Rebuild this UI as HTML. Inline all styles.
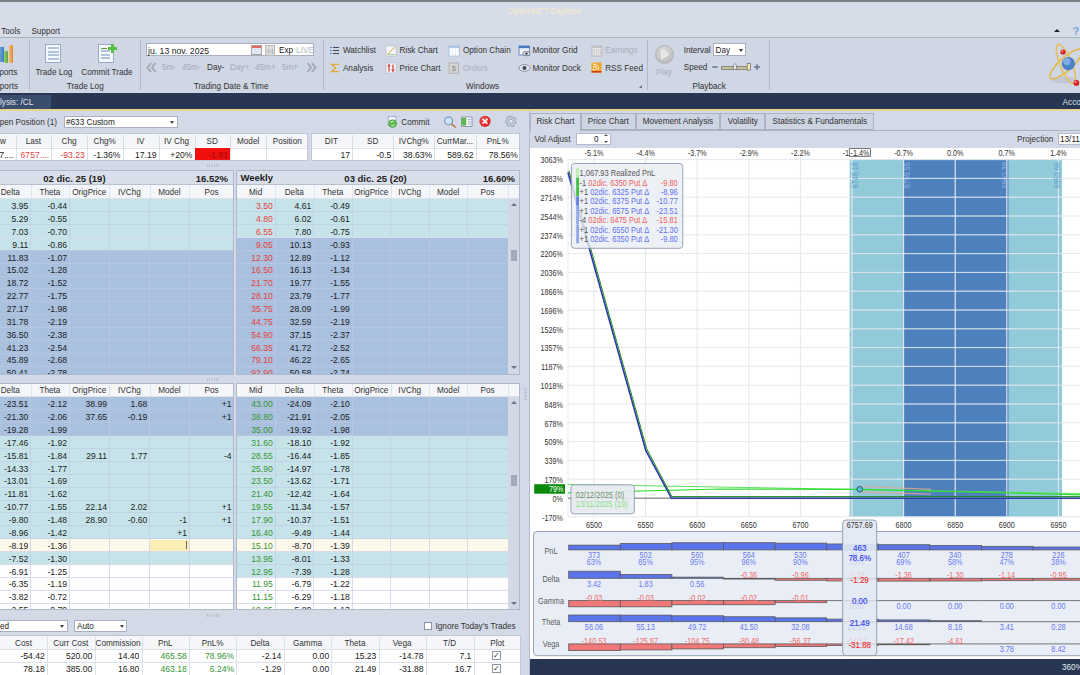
<!DOCTYPE html><html><head><meta charset="utf-8"><style>
html,body{margin:0;padding:0;width:1080px;height:675px;overflow:hidden;background:#d3d9e6;position:relative;font-family:"Liberation Sans",sans-serif;}
body div{position:absolute;}
.t{white-space:nowrap;}
</style></head><body><div style="left:0.00px;top:0.00px;width:1080.00px;height:2.00px;background:#7b7e83"></div>
<div style="left:0.00px;top:2.00px;width:1080.00px;height:35.00px;background:#d6dce8"></div>
<div class="t" style="left:508.00px;top:6.40px;height:12px;line-height:12px;font-size:8.2px;color:#f6eec8">OptionNET Explorer</div>
<div class="t" style="left:1.20px;top:25.50px;height:12px;line-height:12px;font-size:8.2px;color:#333">Tools</div>
<div class="t" style="left:31.40px;top:25.50px;height:12px;line-height:12px;font-size:8.2px;color:#333">Support</div>
<div style="left:1053.7px;top:28.8px;width:0;height:0;border-left:3.1px solid transparent;border-right:3.1px solid transparent;border-bottom:3px solid #222"></div>
<div class="t" style="left:1072.50px;top:24.70px;height:12px;line-height:12px;font-size:11px;color:#78a8e0;font-weight:bold">?</div>
<div style="left:0.00px;top:37.00px;width:1080.00px;height:1.00px;background:#a9b1bf"></div>
<div style="left:0.00px;top:38.00px;width:1080.00px;height:54.00px;background:#cfd6e4"></div>
<div style="left:28.50px;top:40.00px;width:1.00px;height:50.00px;background:#b3bbca"></div>
<div style="left:140.30px;top:40.00px;width:1.00px;height:50.00px;background:#b3bbca"></div>
<div style="left:323.00px;top:40.00px;width:1.00px;height:50.00px;background:#b3bbca"></div>
<div style="left:647.40px;top:40.00px;width:1.00px;height:50.00px;background:#b3bbca"></div>
<div style="left:769.40px;top:40.00px;width:1.00px;height:50.00px;background:#b3bbca"></div>
<div style="left:0px;top:47px;width:4px;height:15px;background:linear-gradient(90deg,#6aa0d8,#3f78c0)"></div>
<div style="left:4px;top:51px;width:4px;height:12px;background:linear-gradient(90deg,#9cd070,#58a040);border-radius:1px"></div>
<div style="left:8.5px;top:45px;width:4px;height:18px;background:linear-gradient(90deg,#f4c070,#e08a30);border-radius:1px"></div>
<div class="t" style="left:-182.60px;width:200.00px;text-align:right;top:66.90px;height:12px;line-height:12px;font-size:8.2px;color:#333">ports</div>
<div class="t" style="left:-182.00px;width:200.00px;text-align:right;top:81.10px;height:12px;line-height:12px;font-size:8.2px;color:#333">ports</div>
<div style="left:45px;top:44px;width:16px;height:19px;background:#f4f7fb;border:1px solid #9aaac0;box-sizing:border-box"></div>
<div style="left:47.50px;top:47.00px;width:11.00px;height:2.20px;background:#b0c2dc"></div>
<div style="left:47.50px;top:50.60px;width:11.00px;height:2.20px;background:#b0c2dc"></div>
<div style="left:47.50px;top:54.20px;width:11.00px;height:2.20px;background:#b0c2dc"></div>
<div style="left:47.50px;top:57.80px;width:11.00px;height:2.20px;background:#b0c2dc"></div>
<div class="t" style="left:35.40px;top:66.90px;height:12px;line-height:12px;font-size:8.2px;color:#333">Trade Log</div>
<div style="left:98px;top:44px;width:16px;height:19px;background:#f4f7fb;border:1px solid #9aaac0;box-sizing:border-box"></div>
<div style="left:100.50px;top:50.00px;width:9.00px;height:2.20px;background:#b0c2dc"></div>
<div style="left:100.50px;top:53.60px;width:9.00px;height:2.20px;background:#b0c2dc"></div>
<div style="left:100.50px;top:57.20px;width:9.00px;height:2.20px;background:#b0c2dc"></div>
<div style="left:101.00px;top:47.50px;width:6.00px;height:1.20px;background:#5aa040"></div>
<div style="left:108px;top:44px;width:9px;height:9px;background:#58c040;clip-path:polygon(33% 0,67% 0,67% 33%,100% 33%,100% 67%,67% 67%,67% 100%,33% 100%,33% 67%,0 67%,0 33%,33% 33%)"></div>
<div class="t" style="left:81.25px;top:66.90px;height:12px;line-height:12px;font-size:8.2px;color:#333">Commit Trade</div>
<div class="t" style="left:66.70px;top:81.10px;height:12px;line-height:12px;font-size:8.2px;color:#333">Trade Log</div>
<div style="left:146.2px;top:43.4px;width:168.3px;height:13.1px;background:#fff;border:1px solid #a6b0c0;box-sizing:border-box"></div>
<div class="t" style="left:148.00px;top:44.70px;height:12px;line-height:12px;font-size:8.2px;color:#222;font-size:8.7px">ju. 13 nov. 2025</div>
<div style="left:251.2px;top:45px;width:10.5px;height:10px;background:linear-gradient(#e86a5a 0,#e86a5a 30%,#dfe8f4 30%);border:1px solid #b0a0a0;box-sizing:border-box"></div>
<div style="left:265.3px;top:44.5px;width:10.2px;height:11px;background:#dcdcdc;border:1px solid #b8b8b8;box-sizing:border-box"></div>
<div class="t" style="left:265.40px;width:10.00px;text-align:center;top:44.70px;height:12px;line-height:12px;font-size:6px;color:#888">|-|</div>
<div class="t" style="left:279.00px;top:44.70px;height:12px;line-height:12px;font-size:8.2px;color:#222">Exp</div>
<div class="t" style="left:296.20px;top:44.70px;height:12px;line-height:12px;font-size:8.2px;color:#b4bac6">LIVE</div>
<svg style="position:absolute;left:146px;top:62px" width="11" height="11" viewBox="0 0 11 11"><path d="M5 1 L1.5 5.5 L5 10 M9.5 1 L6 5.5 L9.5 10" fill="none" stroke="#a4aab4" stroke-width="2"/></svg>
<div class="t" style="left:162.00px;top:61.90px;height:12px;line-height:12px;font-size:8.2px;color:#a4aab6">5m-</div>
<div class="t" style="left:182.00px;top:61.90px;height:12px;line-height:12px;font-size:8.2px;color:#a4aab6">45m-</div>
<div class="t" style="left:207.00px;top:61.90px;height:12px;line-height:12px;font-size:8.2px;color:#333">Day-</div>
<div class="t" style="left:230.00px;top:61.90px;height:12px;line-height:12px;font-size:8.2px;color:#a4aab6">Day+</div>
<div class="t" style="left:255.00px;top:61.90px;height:12px;line-height:12px;font-size:8.2px;color:#a4aab6">45m+</div>
<div class="t" style="left:282.00px;top:61.90px;height:12px;line-height:12px;font-size:8.2px;color:#a4aab6">5m+</div>
<svg style="position:absolute;left:305.5px;top:62px" width="11" height="11" viewBox="0 0 11 11"><path d="M1.5 1 L5 5.5 L1.5 10 M6 1 L9.5 5.5 L6 10" fill="none" stroke="#a4aab4" stroke-width="2"/></svg>
<div class="t" style="left:193.70px;top:80.90px;height:12px;line-height:12px;font-size:8.2px;color:#333">Trading Date &amp; Time</div>
<div style="left:330.00px;top:46.50px;width:1.60px;height:1.60px;background:#5a8ad0"></div>
<div style="left:332.50px;top:46.80px;width:6.50px;height:1.10px;background:#445"></div>
<div style="left:330.00px;top:49.50px;width:1.60px;height:1.60px;background:#5a8ad0"></div>
<div style="left:332.50px;top:49.80px;width:6.50px;height:1.10px;background:#445"></div>
<div style="left:330.00px;top:52.50px;width:1.60px;height:1.60px;background:#5a8ad0"></div>
<div style="left:332.50px;top:52.80px;width:6.50px;height:1.10px;background:#445"></div>
<div class="t" style="left:342.90px;top:45.20px;height:12px;line-height:12px;font-size:8.2px;color:#333">Watchlist</div>
<svg style="position:absolute;left:329.5px;top:62.5px" width="10" height="10" viewBox="0 0 10 10"><path d="M9 1.4 L1.8 1.4 L5.6 5 L1.8 8.6 L9 8.6" fill="none" stroke="#e8a838" stroke-width="1.4" stroke-linejoin="miter"/></svg>
<div class="t" style="left:342.90px;top:62.60px;height:12px;line-height:12px;font-size:8.2px;color:#333">Analysis</div>
<svg style="position:absolute;left:385px;top:44.5px" width="12" height="12" viewBox="385 44.5 12 12"><rect x="386" y="45.5" width="10" height="10" fill="#f6f8fa" stroke="#b8c2d0" stroke-width="0.8"/><path d="M387.5 53.5 C389.5 53.5 390 50.5 391.2 49.8 C392.4 49 393 48 394.8 47" fill="none" stroke="#d0a020" stroke-width="1"/><path d="M387.5 54 L394.8 54" stroke="#70b050" stroke-width="0.6"/></svg>
<div class="t" style="left:399.50px;top:45.20px;height:12px;line-height:12px;font-size:8.2px;color:#333">Risk Chart</div>
<svg style="position:absolute;left:385px;top:62px" width="12" height="12" viewBox="385 62 12 12"><rect x="386" y="63" width="10" height="10" fill="#f8f8fa" stroke="#b8c2d0" stroke-width="0.8"/><path d="M389 64.5 L389 71.5 M393 64.5 L393 71.5" stroke="#d02020" stroke-width="1.1"/><path d="M387.6 66.4 L389 64.6 L390.4 66.4 M391.6 69.6 L393 71.4 L394.4 69.6" fill="none" stroke="#d02020" stroke-width="0.9"/></svg>
<div class="t" style="left:399.50px;top:62.60px;height:12px;line-height:12px;font-size:8.2px;color:#333">Price Chart</div>
<svg style="position:absolute;left:447.5px;top:45px" width="12" height="12" viewBox="447.5 45 12 12"><rect x="448.4" y="46" width="10.5" height="10" fill="#dfe9f6" stroke="#b0c4de" stroke-width="0.8"/><rect x="448.4" y="46" width="10.5" height="1.8" fill="#a8c0e0"/><rect x="449.8" y="48.2" width="2" height="7.2" fill="#fff"/><rect x="452.7" y="48.2" width="2" height="7.2" fill="#fff"/><rect x="455.6" y="48.2" width="2" height="7.2" fill="#fff"/></svg>
<div class="t" style="left:462.90px;top:45.20px;height:12px;line-height:12px;font-size:8.2px;color:#333">Option Chain</div>
<svg style="position:absolute;left:447.5px;top:62px" width="12" height="12" viewBox="447.5 62 12 12"><rect x="448.6" y="63" width="9.5" height="10.2" fill="#d4d4d4" stroke="#a8a8a8" stroke-width="0.8"/><text x="453.3" y="71.3" font-size="7.5" text-anchor="middle" fill="#8a8a8a" font-family="Liberation Sans">$</text></svg>
<div class="t" style="left:462.90px;top:62.60px;height:12px;line-height:12px;font-size:8.2px;color:#a8aebb">Orders</div>
<svg style="position:absolute;left:518px;top:45px" width="13" height="12" viewBox="518 45 13 12"><rect x="519" y="46" width="10.5" height="9" fill="#eef3fa" stroke="#5a80c0" stroke-width="0.9"/><rect x="519" y="46" width="10.5" height="2.2" fill="#4a78c0"/><ellipse cx="526.5" cy="53.6" rx="3.6" ry="2.2" fill="#dfe4ea" stroke="#5a6070" stroke-width="0.7"/><circle cx="526.5" cy="53.6" r="1.2" fill="#303848"/></svg>
<div class="t" style="left:532.50px;top:45.20px;height:12px;line-height:12px;font-size:8.2px;color:#333">Monitor Grid</div>
<svg style="position:absolute;left:518px;top:63px" width="13" height="10" viewBox="518 63 13 10"><ellipse cx="524.5" cy="67.9" rx="5.6" ry="3.4" fill="#dfe4ea" stroke="#7a8090" stroke-width="0.8"/><circle cx="524.5" cy="67.9" r="2" fill="#404858"/></svg>
<div class="t" style="left:532.50px;top:62.60px;height:12px;line-height:12px;font-size:8.2px;color:#333">Monitor Dock</div>
<svg style="position:absolute;left:590.5px;top:44.5px" width="12" height="12" viewBox="590.5 44.5 12 12"><rect x="591.5" y="45.5" width="10" height="10" fill="#e4e4e4" stroke="#b4b4b4" stroke-width="0.8"/><rect x="591.5" y="45.5" width="10" height="2" fill="#c4c4c4"/><path d="M593.5 49 L593.5 54 M595.8 49 L595.8 54 M598.1 49 L598.1 54 M600 49 L600 54" stroke="#c0c0c0" stroke-width="0.7"/></svg>
<div class="t" style="left:605.20px;top:45.20px;height:12px;line-height:12px;font-size:8.2px;color:#a8aebb">Earnings</div>
<svg style="position:absolute;left:591px;top:62px" width="11" height="11" viewBox="591 62 11 11"><rect x="591.5" y="62.5" width="10" height="10" fill="#f0a428"/><rect x="591.5" y="71" width="10" height="1.6" fill="#d83a18"/><circle cx="593.6" cy="69.4" r="1" fill="#fff"/><path d="M593 66.2 a3.4 3.4 0 0 1 3.6 3.4 M593 64 a5.6 5.6 0 0 1 5.8 5.6" fill="none" stroke="#fff" stroke-width="1"/></svg>
<div class="t" style="left:605.20px;top:62.60px;height:12px;line-height:12px;font-size:8.2px;color:#333">RSS Feed</div>
<div class="t" style="left:466.00px;top:80.90px;height:12px;line-height:12px;font-size:8.2px;color:#333">Windows</div>
<div style="left:639px;top:85px;width:0;height:0;border-left:3px solid transparent;border-bottom:3px solid #6a7080"></div>
<div style="left:654.9px;top:44.9px;width:18.8px;height:18.8px;border-radius:50%;background:radial-gradient(circle at 45% 30%,#dcdcdc,#c4c4c4 60%,#b4b4b4);border:0.8px solid #b0b2b8;box-sizing:border-box"></div>
<svg style="position:absolute;left:654px;top:44px" width="20" height="20" viewBox="654 44 20 20"><path d="M661.6 49.8 L668.8 54.3 L661.6 58.8 Z" fill="#e4e4e4" stroke="#f4f4f4" stroke-width="0.8"/></svg>
<div class="t" style="left:649.00px;width:30.00px;text-align:center;top:66.90px;height:12px;line-height:12px;font-size:8.2px;color:#a8aebb">Play</div>
<div class="t" style="left:683.70px;top:44.70px;height:12px;line-height:12px;font-size:8.2px;color:#333">Interval</div>
<div style="left:713.1px;top:43.4px;width:33.4px;height:13.1px;background:#fff;border:1px solid #a6b0c0;box-sizing:border-box"></div>
<div class="t" style="left:715.50px;top:44.70px;height:12px;line-height:12px;font-size:8.2px;color:#222">Day</div>
<div style="left:738.5px;top:48.5px;width:0;height:0;border-left:2.5px solid transparent;border-right:2.5px solid transparent;border-top:3px solid #333"></div>
<div class="t" style="left:683.70px;top:61.90px;height:12px;line-height:12px;font-size:8.2px;color:#333">Speed</div>
<div style="left:711.50px;top:66.20px;width:6.50px;height:1.80px;background:#8090a8;border-radius:1px"></div>
<div style="left:721.00px;top:66.30px;width:27.00px;height:1.80px;background:#c8c098;border:0.5px solid #8a8a80"></div>
<svg style="position:absolute;left:730px;top:62px" width="30" height="10" viewBox="730 62 30 10"><path d="M734.9 63.6 L736.4 65 L736.4 68.6 L734.9 70 L733.4 68.6 L733.4 65 Z" fill="#e8e8e8" stroke="#6a7080" stroke-width="0.7"/><rect x="747.2" y="63.4" width="3.3" height="6.8" fill="#f8e8a8" stroke="#6a6a70" stroke-width="0.7"/><path d="M754 67.1 L760 67.1 M757 64.2 L757 70" stroke="#6a7890" stroke-width="1.5"/></svg>
<div class="t" style="left:692.50px;top:80.90px;height:12px;line-height:12px;font-size:8.2px;color:#333">Playback</div>
<svg style="position:absolute;left:1040px;top:38px" width="40" height="54" viewBox="1040 38 40 54">
<ellipse cx="1063" cy="80" rx="13" ry="3.5" fill="#b8bcc8" opacity="0.55"/>
<ellipse cx="1066" cy="64" rx="21" ry="6.5" transform="rotate(-42 1066 64)" fill="none" stroke="#e4b840" stroke-width="1.5"/>
<ellipse cx="1066" cy="64" rx="21" ry="6" transform="rotate(68 1066 64)" fill="none" stroke="#e8c050" stroke-width="1.5"/>
<circle cx="1068.4" cy="63.7" r="6.6" fill="#4a80c8"/>
<circle cx="1066.8" cy="61.6" r="3.6" fill="#8cb8e8" opacity="0.8"/>
<circle cx="1063" cy="52" r="2.6" fill="#d82020"/><circle cx="1062.4" cy="51.3" r="1" fill="#ff9090"/>
<circle cx="1076.4" cy="82.9" r="2.9" fill="#d82020"/><circle cx="1075.6" cy="82" r="1.1" fill="#ff9090"/>
</svg>
<div style="left:0.00px;top:93.00px;width:1080.00px;height:16.00px;background:#283652"></div>
<div style="left:0.00px;top:95.00px;width:51.00px;height:14.00px;background:#3a4d6c"></div>
<div class="t" style="left:0.00px;top:96.70px;height:12px;line-height:12px;font-size:8.2px;color:#e2e8f2">lysis: /CL</div>
<div class="t" style="left:1062.60px;top:97.20px;height:12px;line-height:12px;font-size:8.2px;color:#dce2ec">Acco</div>
<div style="left:0.00px;top:109.00px;width:1080.00px;height:2.00px;background:#e4d68e"></div>
<div style="left:0.00px;top:111.00px;width:529.00px;height:564.00px;background:#d3d9e6"></div>
<div class="t" style="left:-143.00px;width:200.00px;text-align:right;top:116.70px;height:12px;line-height:12px;font-size:8.2px;color:#333">pen Position (1)</div>
<div style="left:63.5px;top:115.75px;width:114px;height:11.75px;background:#fff;border:1px solid #a6b0c0;box-sizing:border-box"></div>
<div class="t" style="left:66.00px;top:116.70px;height:12px;line-height:12px;font-size:8.2px;color:#222">#633 Custom</div>
<div style="left:170px;top:120.5px;width:0;height:0;border-left:2.5px solid transparent;border-right:2.5px solid transparent;border-top:3px solid #444"></div>
<svg style="position:absolute;left:380px;top:112px" width="140" height="20" viewBox="380 112 140 20">
<rect x="388.3" y="116.6" width="7.6" height="9" fill="#f6f8fb" stroke="#8fa0c0" stroke-width="0.8"/>
<circle cx="392.6" cy="123.6" r="3.9" fill="#58b848" stroke="#3a8a38" stroke-width="0.5"/>
<path d="M390.6 123 a2 2 0 0 1 3.6 -0.8 M394.6 124.2 a2 2 0 0 1 -3.6 0.8" fill="none" stroke="#e8f8e0" stroke-width="0.9"/>
<line x1="451.5" y1="123.8" x2="455.2" y2="127" stroke="#b87830" stroke-width="1.6" stroke-linecap="round"/>
<circle cx="448.6" cy="120.9" r="3.9" fill="#cfe2f6" stroke="#6a8ec0" stroke-width="1.1"/>
<rect x="461.6" y="117" width="10.4" height="9.4" fill="#fafbfd" stroke="#7c8aa4" stroke-width="0.8"/>
<rect x="461.6" y="117.8" width="4.6" height="7.8" fill="#5cb848"/>
<line x1="467.6" y1="119.6" x2="471.2" y2="119.6" stroke="#8090a8" stroke-width="0.7"/>
<line x1="467.6" y1="121.8" x2="471.2" y2="121.8" stroke="#8090a8" stroke-width="0.7"/>
<line x1="467.6" y1="124" x2="471.2" y2="124" stroke="#8090a8" stroke-width="0.7"/>
<circle cx="485" cy="121.3" r="5.6" fill="#e02828"/>
<circle cx="484.2" cy="120.2" r="3.8" fill="#f06060" opacity="0.6"/>
<path d="M482.6 118.9 L487.4 123.7 M487.4 118.9 L482.6 123.7" stroke="#fff" stroke-width="1.5"/>
<g transform="translate(511 121.3)"><path d="M-1.1 -5 L1.1 -5 L1.4 -3.6 L2.7 -3 L3.9 -3.9 L5 -2.4 L3.9 -1.3 L4.2 0 L5.2 0.6 L4.7 2.6 L3.4 2.6 L2.6 3.6 L2.9 4.9 L1 5.3 L0.2 4.2 L-1.2 4.2 L-2 5.2 L-3.8 4.2 L-3.4 2.9 L-4.2 1.8 L-5.4 1.4 L-5.2 -0.6 L-4 -1.1 L-3.6 -2.4 L-4.2 -3.6 L-2.6 -4.8 L-1.6 -3.9 Z" fill="#c4cedf" stroke="#8290a8" stroke-width="0.7"/><circle r="2" fill="#e4e9f2" stroke="#8290a8" stroke-width="0.6"/></g>
</svg>
<div class="t" style="left:401.25px;top:116.70px;height:12px;line-height:12px;font-size:8.2px;color:#333">Commit</div>
<div style="left:-20.00px;top:133.10px;width:328.25px;height:27.60px;background:#fff;border:1px solid #bfc7d4;box-sizing:border-box"></div>
<div style="left:-19.00px;top:134.10px;width:326.25px;height:13.40px;background:#f4f6fa"></div>
<div style="left:-19.00px;top:147.50px;width:326.25px;height:0.80px;background:#dfe4ec"></div>
<div style="left:15.50px;top:134.75px;width:0.90px;height:25.00px;background:#d8dee8"></div>
<div style="left:51.25px;top:134.75px;width:0.90px;height:25.00px;background:#d8dee8"></div>
<div style="left:86.75px;top:134.75px;width:0.90px;height:25.00px;background:#d8dee8"></div>
<div style="left:122.50px;top:134.75px;width:0.90px;height:25.00px;background:#d8dee8"></div>
<div style="left:158.50px;top:134.75px;width:0.90px;height:25.00px;background:#d8dee8"></div>
<div style="left:194.50px;top:134.75px;width:0.90px;height:25.00px;background:#d8dee8"></div>
<div style="left:230.00px;top:134.75px;width:0.90px;height:25.00px;background:#d8dee8"></div>
<div style="left:266.25px;top:134.75px;width:0.90px;height:25.00px;background:#d8dee8"></div>
<div class="t" style="left:-20.00px;width:35.50px;text-align:center;top:135.70px;height:12px;line-height:12px;font-size:8.2px;color:#333">Now</div>
<div class="t" style="left:15.50px;width:35.75px;text-align:center;top:135.70px;height:12px;line-height:12px;font-size:8.2px;color:#333">Last</div>
<div class="t" style="left:51.25px;width:35.50px;text-align:center;top:135.70px;height:12px;line-height:12px;font-size:8.2px;color:#333">Chg</div>
<div class="t" style="left:86.75px;width:35.75px;text-align:center;top:135.70px;height:12px;line-height:12px;font-size:8.2px;color:#333">Chg%</div>
<div class="t" style="left:122.50px;width:36.00px;text-align:center;top:135.70px;height:12px;line-height:12px;font-size:8.2px;color:#333">IV</div>
<div class="t" style="left:158.50px;width:36.00px;text-align:center;top:135.70px;height:12px;line-height:12px;font-size:8.2px;color:#333">IV Chg</div>
<div class="t" style="left:194.50px;width:35.50px;text-align:center;top:135.70px;height:12px;line-height:12px;font-size:8.2px;color:#333">SD</div>
<div class="t" style="left:230.00px;width:36.25px;text-align:center;top:135.70px;height:12px;line-height:12px;font-size:8.2px;color:#333">Model</div>
<div class="t" style="left:266.25px;width:42.00px;text-align:center;top:135.70px;height:12px;line-height:12px;font-size:8.2px;color:#333">Position</div>
<div class="t" style="left:-19.00px;width:32.50px;text-align:right;top:149.20px;height:12px;line-height:12px;font-size:8.2px;color:#222;font-size:8.6px">7....</div>
<div class="t" style="left:16.50px;width:32.75px;text-align:right;top:149.20px;height:12px;line-height:12px;font-size:8.2px;color:#e8403c;font-size:8.6px">6757....</div>
<div class="t" style="left:52.25px;width:32.50px;text-align:right;top:149.20px;height:12px;line-height:12px;font-size:8.2px;color:#e8403c;font-size:8.6px">-93.23</div>
<div class="t" style="left:87.75px;width:32.75px;text-align:right;top:149.20px;height:12px;line-height:12px;font-size:8.2px;color:#222;font-size:8.6px">-1.36%</div>
<div class="t" style="left:123.50px;width:33.00px;text-align:right;top:149.20px;height:12px;line-height:12px;font-size:8.2px;color:#222;font-size:8.6px">17.19</div>
<div class="t" style="left:159.50px;width:33.00px;text-align:right;top:149.20px;height:12px;line-height:12px;font-size:8.2px;color:#222;font-size:8.6px">+20%</div>
<div class="t" style="left:195.50px;width:32.50px;text-align:right;top:149.20px;height:12px;line-height:12px;font-size:8.2px;color:#8a0000;font-size:8.6px">-1.81</div>
<div class="t" style="left:231.00px;width:33.25px;text-align:right;top:149.20px;height:12px;line-height:12px;font-size:8.2px;color:#222;font-size:8.6px"></div>
<div class="t" style="left:267.25px;width:39.00px;text-align:right;top:149.20px;height:12px;line-height:12px;font-size:8.2px;color:#222;font-size:8.6px"></div>
<div style="left:195.40px;top:148.30px;width:34.60px;height:12.20px;background:#f01010"></div>
<div class="t" style="left:198.00px;width:30.00px;text-align:right;top:149.20px;height:12px;line-height:12px;font-size:8.2px;color:#a00000;font-size:8.6px">-1.81</div>
<div style="left:310.75px;top:133.10px;width:209.25px;height:27.60px;background:#fff;border:1px solid #bfc7d4;box-sizing:border-box"></div>
<div style="left:311.75px;top:134.10px;width:207.25px;height:13.40px;background:#f4f6fa"></div>
<div style="left:311.75px;top:147.50px;width:207.25px;height:0.80px;background:#dfe4ec"></div>
<div style="left:352.00px;top:134.75px;width:0.90px;height:25.00px;background:#d8dee8"></div>
<div style="left:393.25px;top:134.75px;width:0.90px;height:25.00px;background:#d8dee8"></div>
<div style="left:434.25px;top:134.75px;width:0.90px;height:25.00px;background:#d8dee8"></div>
<div style="left:475.50px;top:134.75px;width:0.90px;height:25.00px;background:#d8dee8"></div>
<div class="t" style="left:310.75px;width:41.25px;text-align:center;top:135.70px;height:12px;line-height:12px;font-size:8.2px;color:#333">DIT</div>
<div class="t" style="left:352.00px;width:41.25px;text-align:center;top:135.70px;height:12px;line-height:12px;font-size:8.2px;color:#333">SD</div>
<div class="t" style="left:393.25px;width:41.00px;text-align:center;top:135.70px;height:12px;line-height:12px;font-size:8.2px;color:#333">IVChg%</div>
<div class="t" style="left:434.25px;width:41.25px;text-align:center;top:135.70px;height:12px;line-height:12px;font-size:8.2px;color:#333">CurrMar...</div>
<div class="t" style="left:475.50px;width:44.50px;text-align:center;top:135.70px;height:12px;line-height:12px;font-size:8.2px;color:#333">PnL%</div>
<div class="t" style="left:311.75px;width:38.25px;text-align:right;top:149.20px;height:12px;line-height:12px;font-size:8.2px;color:#222;font-size:8.6px">17</div>
<div class="t" style="left:353.00px;width:38.25px;text-align:right;top:149.20px;height:12px;line-height:12px;font-size:8.2px;color:#222;font-size:8.6px">-0.5</div>
<div class="t" style="left:394.25px;width:38.00px;text-align:right;top:149.20px;height:12px;line-height:12px;font-size:8.2px;color:#222;font-size:8.6px">38.63%</div>
<div class="t" style="left:435.25px;width:38.25px;text-align:right;top:149.20px;height:12px;line-height:12px;font-size:8.2px;color:#222;font-size:8.6px">589.62</div>
<div class="t" style="left:476.50px;width:41.50px;text-align:right;top:149.20px;height:12px;line-height:12px;font-size:8.2px;color:#222;font-size:8.6px">78.56%</div>
<div style="left:207px;top:164px;width:12px;height:3px;background:repeating-linear-gradient(90deg,#aeb6c4 0 1px,transparent 1px 2.2px);opacity:0.75"></div>
<div style="left:0px;top:169.8px;width:233.75px;height:205.3px;overflow:hidden;background:#fff;border:1px solid #b0b9ca;border-left:none;box-sizing:border-box">
<div style="left:0.00px;top:-1.00px;width:233.75px;height:15.20px;background:#d9dfea"></div>
<div style="left:0.00px;top:13.40px;width:233.75px;height:0.80px;background:#b8c1cf"></div>
<div class="t" style="left:14.40px;width:120.00px;text-align:center;top:1.80px;height:12px;line-height:12px;font-size:8.2px;color:#222;font-weight:bold;font-size:9.5px">02 dic. 25 (19)</div>
<div class="t" style="left:148.00px;width:80.00px;text-align:right;top:1.80px;height:12px;line-height:12px;font-size:8.2px;color:#222;font-weight:bold;font-size:9.5px">16.52%</div>
<div style="left:0.00px;top:14.20px;width:233.75px;height:13.90px;background:#f4f6fa"></div>
<div style="left:0.00px;top:27.30px;width:233.75px;height:0.80px;background:#dde3eb"></div>
<div class="t" style="left:-12.00px;width:44.50px;text-align:center;top:15.85px;height:12px;line-height:12px;font-size:8.2px;color:#333">Delta</div>
<div class="t" style="left:28.50px;width:42.75px;text-align:center;top:15.85px;height:12px;line-height:12px;font-size:8.2px;color:#333">Theta</div>
<div class="t" style="left:67.25px;width:44.00px;text-align:center;top:15.85px;height:12px;line-height:12px;font-size:8.2px;color:#333">OrigPrice</div>
<div class="t" style="left:107.25px;width:44.25px;text-align:center;top:15.85px;height:12px;line-height:12px;font-size:8.2px;color:#333">IVChg</div>
<div class="t" style="left:147.50px;width:43.75px;text-align:center;top:15.85px;height:12px;line-height:12px;font-size:8.2px;color:#333">Model</div>
<div class="t" style="left:187.25px;width:48.50px;text-align:center;top:15.85px;height:12px;line-height:12px;font-size:8.2px;color:#333">Pos</div>
<div style="left:30.50px;top:14.20px;width:0.90px;height:13.90px;background:#dfe4ec"></div>
<div style="left:69.25px;top:14.20px;width:0.90px;height:13.90px;background:#dfe4ec"></div>
<div style="left:109.25px;top:14.20px;width:0.90px;height:13.90px;background:#dfe4ec"></div>
<div style="left:149.50px;top:14.20px;width:0.90px;height:13.90px;background:#dfe4ec"></div>
<div style="left:189.25px;top:14.20px;width:0.90px;height:13.90px;background:#dfe4ec"></div>
<div style="left:233.75px;top:14.20px;width:0.90px;height:13.90px;background:#dfe4ec"></div>
<div style="left:0.00px;top:28.10px;width:233.75px;height:12.87px;background:#c6e3e9"></div>
<div style="left:0.00px;top:40.97px;width:233.75px;height:12.87px;background:#c6e3e9"></div>
<div style="left:0.00px;top:53.84px;width:233.75px;height:12.87px;background:#c6e3e9"></div>
<div style="left:0.00px;top:66.71px;width:233.75px;height:12.87px;background:#c6e3e9"></div>
<div style="left:0.00px;top:79.58px;width:233.75px;height:12.87px;background:#a9c0de"></div>
<div style="left:0.00px;top:92.45px;width:233.75px;height:12.87px;background:#a9c0de"></div>
<div style="left:0.00px;top:105.32px;width:233.75px;height:12.87px;background:#a9c0de"></div>
<div style="left:0.00px;top:118.19px;width:233.75px;height:12.87px;background:#a9c0de"></div>
<div style="left:0.00px;top:131.06px;width:233.75px;height:12.87px;background:#a9c0de"></div>
<div style="left:0.00px;top:143.93px;width:233.75px;height:12.87px;background:#a9c0de"></div>
<div style="left:0.00px;top:156.80px;width:233.75px;height:12.87px;background:#a9c0de"></div>
<div style="left:0.00px;top:169.67px;width:233.75px;height:12.87px;background:#a9c0de"></div>
<div style="left:0.00px;top:182.54px;width:233.75px;height:12.87px;background:#a9c0de"></div>
<div style="left:0.00px;top:195.41px;width:233.75px;height:12.87px;background:#a9c0de"></div>
<div style="left:0.00px;top:208.28px;width:233.75px;height:12.87px;background:#a9c0de"></div>
<div style="left:0.00px;top:40.47px;width:233.75px;height:1.00px;background:rgba(196,200,226,0.62)"></div>
<div style="left:0.00px;top:53.34px;width:233.75px;height:1.00px;background:rgba(196,200,226,0.62)"></div>
<div style="left:0.00px;top:66.21px;width:233.75px;height:1.00px;background:rgba(196,200,226,0.62)"></div>
<div style="left:0.00px;top:79.08px;width:233.75px;height:1.00px;background:rgba(196,200,226,0.62)"></div>
<div style="left:0.00px;top:91.95px;width:233.75px;height:1.00px;background:rgba(196,200,226,0.62)"></div>
<div style="left:0.00px;top:104.82px;width:233.75px;height:1.00px;background:rgba(196,200,226,0.62)"></div>
<div style="left:0.00px;top:117.69px;width:233.75px;height:1.00px;background:rgba(196,200,226,0.62)"></div>
<div style="left:0.00px;top:130.56px;width:233.75px;height:1.00px;background:rgba(196,200,226,0.62)"></div>
<div style="left:0.00px;top:143.43px;width:233.75px;height:1.00px;background:rgba(196,200,226,0.62)"></div>
<div style="left:0.00px;top:156.30px;width:233.75px;height:1.00px;background:rgba(196,200,226,0.62)"></div>
<div style="left:0.00px;top:169.17px;width:233.75px;height:1.00px;background:rgba(196,200,226,0.62)"></div>
<div style="left:0.00px;top:182.04px;width:233.75px;height:1.00px;background:rgba(196,200,226,0.62)"></div>
<div style="left:0.00px;top:194.91px;width:233.75px;height:1.00px;background:rgba(196,200,226,0.62)"></div>
<div style="left:0.00px;top:207.78px;width:233.75px;height:1.00px;background:rgba(196,200,226,0.62)"></div>
<div style="left:0.00px;top:220.65px;width:233.75px;height:1.00px;background:rgba(196,200,226,0.62)"></div>
<div style="left:30.00px;top:28.10px;width:1.00px;height:176.20px;background:rgba(196,200,226,0.62)"></div>
<div style="left:68.75px;top:28.10px;width:1.00px;height:176.20px;background:rgba(196,200,226,0.62)"></div>
<div style="left:108.75px;top:28.10px;width:1.00px;height:176.20px;background:rgba(196,200,226,0.62)"></div>
<div style="left:149.00px;top:28.10px;width:1.00px;height:176.20px;background:rgba(196,200,226,0.62)"></div>
<div style="left:188.75px;top:28.10px;width:1.00px;height:176.20px;background:rgba(196,200,226,0.62)"></div>
<div style="left:233.25px;top:28.10px;width:1.00px;height:176.20px;background:rgba(196,200,226,0.62)"></div>
<div class="t" style="left:-12.20px;width:40.50px;text-align:right;top:29.23px;height:12px;line-height:12px;font-size:8.2px;color:#222;font-size:8.6px">3.95</div>
<div class="t" style="left:28.30px;width:38.75px;text-align:right;top:29.23px;height:12px;line-height:12px;font-size:8.2px;color:#222;font-size:8.6px">-0.44</div>
<div class="t" style="left:-12.20px;width:40.50px;text-align:right;top:42.11px;height:12px;line-height:12px;font-size:8.2px;color:#222;font-size:8.6px">5.29</div>
<div class="t" style="left:28.30px;width:38.75px;text-align:right;top:42.11px;height:12px;line-height:12px;font-size:8.2px;color:#222;font-size:8.6px">-0.55</div>
<div class="t" style="left:-12.20px;width:40.50px;text-align:right;top:54.98px;height:12px;line-height:12px;font-size:8.2px;color:#222;font-size:8.6px">7.03</div>
<div class="t" style="left:28.30px;width:38.75px;text-align:right;top:54.98px;height:12px;line-height:12px;font-size:8.2px;color:#222;font-size:8.6px">-0.70</div>
<div class="t" style="left:-12.20px;width:40.50px;text-align:right;top:67.84px;height:12px;line-height:12px;font-size:8.2px;color:#222;font-size:8.6px">9.11</div>
<div class="t" style="left:28.30px;width:38.75px;text-align:right;top:67.84px;height:12px;line-height:12px;font-size:8.2px;color:#222;font-size:8.6px">-0.86</div>
<div class="t" style="left:-12.20px;width:40.50px;text-align:right;top:80.71px;height:12px;line-height:12px;font-size:8.2px;color:#222;font-size:8.6px">11.83</div>
<div class="t" style="left:28.30px;width:38.75px;text-align:right;top:80.71px;height:12px;line-height:12px;font-size:8.2px;color:#222;font-size:8.6px">-1.07</div>
<div class="t" style="left:-12.20px;width:40.50px;text-align:right;top:93.58px;height:12px;line-height:12px;font-size:8.2px;color:#222;font-size:8.6px">15.02</div>
<div class="t" style="left:28.30px;width:38.75px;text-align:right;top:93.58px;height:12px;line-height:12px;font-size:8.2px;color:#222;font-size:8.6px">-1.28</div>
<div class="t" style="left:-12.20px;width:40.50px;text-align:right;top:106.45px;height:12px;line-height:12px;font-size:8.2px;color:#222;font-size:8.6px">18.72</div>
<div class="t" style="left:28.30px;width:38.75px;text-align:right;top:106.45px;height:12px;line-height:12px;font-size:8.2px;color:#222;font-size:8.6px">-1.52</div>
<div class="t" style="left:-12.20px;width:40.50px;text-align:right;top:119.33px;height:12px;line-height:12px;font-size:8.2px;color:#222;font-size:8.6px">22.77</div>
<div class="t" style="left:28.30px;width:38.75px;text-align:right;top:119.33px;height:12px;line-height:12px;font-size:8.2px;color:#222;font-size:8.6px">-1.75</div>
<div class="t" style="left:-12.20px;width:40.50px;text-align:right;top:132.19px;height:12px;line-height:12px;font-size:8.2px;color:#222;font-size:8.6px">27.17</div>
<div class="t" style="left:28.30px;width:38.75px;text-align:right;top:132.19px;height:12px;line-height:12px;font-size:8.2px;color:#222;font-size:8.6px">-1.98</div>
<div class="t" style="left:-12.20px;width:40.50px;text-align:right;top:145.06px;height:12px;line-height:12px;font-size:8.2px;color:#222;font-size:8.6px">31.78</div>
<div class="t" style="left:28.30px;width:38.75px;text-align:right;top:145.06px;height:12px;line-height:12px;font-size:8.2px;color:#222;font-size:8.6px">-2.19</div>
<div class="t" style="left:-12.20px;width:40.50px;text-align:right;top:157.94px;height:12px;line-height:12px;font-size:8.2px;color:#222;font-size:8.6px">36.50</div>
<div class="t" style="left:28.30px;width:38.75px;text-align:right;top:157.94px;height:12px;line-height:12px;font-size:8.2px;color:#222;font-size:8.6px">-2.38</div>
<div class="t" style="left:-12.20px;width:40.50px;text-align:right;top:170.81px;height:12px;line-height:12px;font-size:8.2px;color:#222;font-size:8.6px">41.23</div>
<div class="t" style="left:28.30px;width:38.75px;text-align:right;top:170.81px;height:12px;line-height:12px;font-size:8.2px;color:#222;font-size:8.6px">-2.54</div>
<div class="t" style="left:-12.20px;width:40.50px;text-align:right;top:183.68px;height:12px;line-height:12px;font-size:8.2px;color:#222;font-size:8.6px">45.89</div>
<div class="t" style="left:28.30px;width:38.75px;text-align:right;top:183.68px;height:12px;line-height:12px;font-size:8.2px;color:#222;font-size:8.6px">-2.68</div>
<div class="t" style="left:-12.20px;width:40.50px;text-align:right;top:196.55px;height:12px;line-height:12px;font-size:8.2px;color:#222;font-size:8.6px">50.41</div>
<div class="t" style="left:28.30px;width:38.75px;text-align:right;top:196.55px;height:12px;line-height:12px;font-size:8.2px;color:#222;font-size:8.6px">-2.78</div>
<div class="t" style="left:-12.20px;width:40.50px;text-align:right;top:209.41px;height:12px;line-height:12px;font-size:8.2px;color:#222;font-size:8.6px">54.80</div>
<div class="t" style="left:28.30px;width:38.75px;text-align:right;top:209.41px;height:12px;line-height:12px;font-size:8.2px;color:#222;font-size:8.6px">-2.85</div>
</div>
<div style="left:236.25px;top:169.8px;width:283.75px;height:205.3px;overflow:hidden;background:#fff;border:1px solid #b0b9ca;box-sizing:border-box">
<div style="left:-1.00px;top:-1.00px;width:283.75px;height:15.20px;background:#d9dfea"></div>
<div style="left:-1.00px;top:13.40px;width:283.75px;height:0.80px;background:#b8c1cf"></div>
<div class="t" style="left:3.15px;top:1.10px;height:12px;line-height:12px;color:#222;font-weight:bold;font-size:9.5px">Weekly</div>
<div class="t" style="left:78.25px;width:120.00px;text-align:center;top:1.80px;height:12px;line-height:12px;font-size:8.2px;color:#222;font-weight:bold;font-size:9.5px">03 dic. 25 (20)</div>
<div class="t" style="left:197.75px;width:80.00px;text-align:right;top:1.80px;height:12px;line-height:12px;font-size:8.2px;color:#222;font-weight:bold;font-size:9.5px">16.60%</div>
<div style="left:-1.00px;top:14.20px;width:283.75px;height:13.90px;background:#f4f6fa"></div>
<div style="left:-1.00px;top:27.30px;width:283.75px;height:0.80px;background:#dde3eb"></div>
<div class="t" style="left:-3.00px;width:42.75px;text-align:center;top:15.85px;height:12px;line-height:12px;font-size:8.2px;color:#333">Mid</div>
<div class="t" style="left:35.75px;width:42.50px;text-align:center;top:15.85px;height:12px;line-height:12px;font-size:8.2px;color:#333">Delta</div>
<div class="t" style="left:74.25px;width:42.50px;text-align:center;top:15.85px;height:12px;line-height:12px;font-size:8.2px;color:#333">Theta</div>
<div class="t" style="left:112.75px;width:42.50px;text-align:center;top:15.85px;height:12px;line-height:12px;font-size:8.2px;color:#333">OrigPrice</div>
<div class="t" style="left:151.25px;width:42.50px;text-align:center;top:15.85px;height:12px;line-height:12px;font-size:8.2px;color:#333">IVChg</div>
<div class="t" style="left:189.75px;width:42.30px;text-align:center;top:15.85px;height:12px;line-height:12px;font-size:8.2px;color:#333">Model</div>
<div class="t" style="left:228.05px;width:44.70px;text-align:center;top:15.85px;height:12px;line-height:12px;font-size:8.2px;color:#333">Pos</div>
<div style="left:37.75px;top:14.20px;width:0.90px;height:13.90px;background:#dfe4ec"></div>
<div style="left:76.25px;top:14.20px;width:0.90px;height:13.90px;background:#dfe4ec"></div>
<div style="left:114.75px;top:14.20px;width:0.90px;height:13.90px;background:#dfe4ec"></div>
<div style="left:153.25px;top:14.20px;width:0.90px;height:13.90px;background:#dfe4ec"></div>
<div style="left:191.75px;top:14.20px;width:0.90px;height:13.90px;background:#dfe4ec"></div>
<div style="left:230.05px;top:14.20px;width:0.90px;height:13.90px;background:#dfe4ec"></div>
<div style="left:270.75px;top:14.20px;width:0.90px;height:13.90px;background:#dfe4ec"></div>
<div style="left:-1.00px;top:28.10px;width:283.75px;height:12.87px;background:#c6e3e9"></div>
<div style="left:-1.00px;top:40.97px;width:283.75px;height:12.87px;background:#c6e3e9"></div>
<div style="left:-1.00px;top:53.84px;width:283.75px;height:12.87px;background:#c6e3e9"></div>
<div style="left:-1.00px;top:66.71px;width:283.75px;height:12.87px;background:#a9c0de"></div>
<div style="left:-1.00px;top:79.58px;width:283.75px;height:12.87px;background:#a9c0de"></div>
<div style="left:-1.00px;top:92.45px;width:283.75px;height:12.87px;background:#a9c0de"></div>
<div style="left:-1.00px;top:105.32px;width:283.75px;height:12.87px;background:#a9c0de"></div>
<div style="left:-1.00px;top:118.19px;width:283.75px;height:12.87px;background:#a9c0de"></div>
<div style="left:-1.00px;top:131.06px;width:283.75px;height:12.87px;background:#a9c0de"></div>
<div style="left:-1.00px;top:143.93px;width:283.75px;height:12.87px;background:#a9c0de"></div>
<div style="left:-1.00px;top:156.80px;width:283.75px;height:12.87px;background:#a9c0de"></div>
<div style="left:-1.00px;top:169.67px;width:283.75px;height:12.87px;background:#a9c0de"></div>
<div style="left:-1.00px;top:182.54px;width:283.75px;height:12.87px;background:#a9c0de"></div>
<div style="left:-1.00px;top:195.41px;width:283.75px;height:12.87px;background:#a9c0de"></div>
<div style="left:-1.00px;top:208.28px;width:283.75px;height:12.87px;background:#a9c0de"></div>
<div style="left:-1.00px;top:40.47px;width:271.75px;height:1.00px;background:rgba(196,200,226,0.62)"></div>
<div style="left:-1.00px;top:53.34px;width:271.75px;height:1.00px;background:rgba(196,200,226,0.62)"></div>
<div style="left:-1.00px;top:66.21px;width:271.75px;height:1.00px;background:rgba(196,200,226,0.62)"></div>
<div style="left:-1.00px;top:79.08px;width:271.75px;height:1.00px;background:rgba(196,200,226,0.62)"></div>
<div style="left:-1.00px;top:91.95px;width:271.75px;height:1.00px;background:rgba(196,200,226,0.62)"></div>
<div style="left:-1.00px;top:104.82px;width:271.75px;height:1.00px;background:rgba(196,200,226,0.62)"></div>
<div style="left:-1.00px;top:117.69px;width:271.75px;height:1.00px;background:rgba(196,200,226,0.62)"></div>
<div style="left:-1.00px;top:130.56px;width:271.75px;height:1.00px;background:rgba(196,200,226,0.62)"></div>
<div style="left:-1.00px;top:143.43px;width:271.75px;height:1.00px;background:rgba(196,200,226,0.62)"></div>
<div style="left:-1.00px;top:156.30px;width:271.75px;height:1.00px;background:rgba(196,200,226,0.62)"></div>
<div style="left:-1.00px;top:169.17px;width:271.75px;height:1.00px;background:rgba(196,200,226,0.62)"></div>
<div style="left:-1.00px;top:182.04px;width:271.75px;height:1.00px;background:rgba(196,200,226,0.62)"></div>
<div style="left:-1.00px;top:194.91px;width:271.75px;height:1.00px;background:rgba(196,200,226,0.62)"></div>
<div style="left:-1.00px;top:207.78px;width:271.75px;height:1.00px;background:rgba(196,200,226,0.62)"></div>
<div style="left:-1.00px;top:220.65px;width:271.75px;height:1.00px;background:rgba(196,200,226,0.62)"></div>
<div style="left:37.25px;top:28.10px;width:1.00px;height:176.20px;background:rgba(196,200,226,0.62)"></div>
<div style="left:75.75px;top:28.10px;width:1.00px;height:176.20px;background:rgba(196,200,226,0.62)"></div>
<div style="left:114.25px;top:28.10px;width:1.00px;height:176.20px;background:rgba(196,200,226,0.62)"></div>
<div style="left:152.75px;top:28.10px;width:1.00px;height:176.20px;background:rgba(196,200,226,0.62)"></div>
<div style="left:191.25px;top:28.10px;width:1.00px;height:176.20px;background:rgba(196,200,226,0.62)"></div>
<div style="left:229.55px;top:28.10px;width:1.00px;height:176.20px;background:rgba(196,200,226,0.62)"></div>
<div style="left:270.25px;top:28.10px;width:1.00px;height:176.20px;background:rgba(196,200,226,0.62)"></div>
<div class="t" style="left:-3.20px;width:38.75px;text-align:right;top:29.23px;height:12px;line-height:12px;font-size:8.2px;color:#e8403c;font-size:8.6px">3.50</div>
<div class="t" style="left:35.55px;width:38.50px;text-align:right;top:29.23px;height:12px;line-height:12px;font-size:8.2px;color:#222;font-size:8.6px">4.61</div>
<div class="t" style="left:74.05px;width:38.50px;text-align:right;top:29.23px;height:12px;line-height:12px;font-size:8.2px;color:#222;font-size:8.6px">-0.49</div>
<div class="t" style="left:-3.20px;width:38.75px;text-align:right;top:42.11px;height:12px;line-height:12px;font-size:8.2px;color:#e8403c;font-size:8.6px">4.80</div>
<div class="t" style="left:35.55px;width:38.50px;text-align:right;top:42.11px;height:12px;line-height:12px;font-size:8.2px;color:#222;font-size:8.6px">6.02</div>
<div class="t" style="left:74.05px;width:38.50px;text-align:right;top:42.11px;height:12px;line-height:12px;font-size:8.2px;color:#222;font-size:8.6px">-0.61</div>
<div class="t" style="left:-3.20px;width:38.75px;text-align:right;top:54.98px;height:12px;line-height:12px;font-size:8.2px;color:#e8403c;font-size:8.6px">6.55</div>
<div class="t" style="left:35.55px;width:38.50px;text-align:right;top:54.98px;height:12px;line-height:12px;font-size:8.2px;color:#222;font-size:8.6px">7.80</div>
<div class="t" style="left:74.05px;width:38.50px;text-align:right;top:54.98px;height:12px;line-height:12px;font-size:8.2px;color:#222;font-size:8.6px">-0.75</div>
<div class="t" style="left:-3.20px;width:38.75px;text-align:right;top:67.84px;height:12px;line-height:12px;font-size:8.2px;color:#e8403c;font-size:8.6px">9.05</div>
<div class="t" style="left:35.55px;width:38.50px;text-align:right;top:67.84px;height:12px;line-height:12px;font-size:8.2px;color:#222;font-size:8.6px">10.13</div>
<div class="t" style="left:74.05px;width:38.50px;text-align:right;top:67.84px;height:12px;line-height:12px;font-size:8.2px;color:#222;font-size:8.6px">-0.93</div>
<div class="t" style="left:-3.20px;width:38.75px;text-align:right;top:80.71px;height:12px;line-height:12px;font-size:8.2px;color:#e8403c;font-size:8.6px">12.30</div>
<div class="t" style="left:35.55px;width:38.50px;text-align:right;top:80.71px;height:12px;line-height:12px;font-size:8.2px;color:#222;font-size:8.6px">12.89</div>
<div class="t" style="left:74.05px;width:38.50px;text-align:right;top:80.71px;height:12px;line-height:12px;font-size:8.2px;color:#222;font-size:8.6px">-1.12</div>
<div class="t" style="left:-3.20px;width:38.75px;text-align:right;top:93.58px;height:12px;line-height:12px;font-size:8.2px;color:#e8403c;font-size:8.6px">16.50</div>
<div class="t" style="left:35.55px;width:38.50px;text-align:right;top:93.58px;height:12px;line-height:12px;font-size:8.2px;color:#222;font-size:8.6px">16.13</div>
<div class="t" style="left:74.05px;width:38.50px;text-align:right;top:93.58px;height:12px;line-height:12px;font-size:8.2px;color:#222;font-size:8.6px">-1.34</div>
<div class="t" style="left:-3.20px;width:38.75px;text-align:right;top:106.45px;height:12px;line-height:12px;font-size:8.2px;color:#e8403c;font-size:8.6px">21.70</div>
<div class="t" style="left:35.55px;width:38.50px;text-align:right;top:106.45px;height:12px;line-height:12px;font-size:8.2px;color:#222;font-size:8.6px">19.77</div>
<div class="t" style="left:74.05px;width:38.50px;text-align:right;top:106.45px;height:12px;line-height:12px;font-size:8.2px;color:#222;font-size:8.6px">-1.55</div>
<div class="t" style="left:-3.20px;width:38.75px;text-align:right;top:119.33px;height:12px;line-height:12px;font-size:8.2px;color:#e8403c;font-size:8.6px">28.10</div>
<div class="t" style="left:35.55px;width:38.50px;text-align:right;top:119.33px;height:12px;line-height:12px;font-size:8.2px;color:#222;font-size:8.6px">23.79</div>
<div class="t" style="left:74.05px;width:38.50px;text-align:right;top:119.33px;height:12px;line-height:12px;font-size:8.2px;color:#222;font-size:8.6px">-1.77</div>
<div class="t" style="left:-3.20px;width:38.75px;text-align:right;top:132.19px;height:12px;line-height:12px;font-size:8.2px;color:#e8403c;font-size:8.6px">35.75</div>
<div class="t" style="left:35.55px;width:38.50px;text-align:right;top:132.19px;height:12px;line-height:12px;font-size:8.2px;color:#222;font-size:8.6px">28.09</div>
<div class="t" style="left:74.05px;width:38.50px;text-align:right;top:132.19px;height:12px;line-height:12px;font-size:8.2px;color:#222;font-size:8.6px">-1.99</div>
<div class="t" style="left:-3.20px;width:38.75px;text-align:right;top:145.06px;height:12px;line-height:12px;font-size:8.2px;color:#e8403c;font-size:8.6px">44.75</div>
<div class="t" style="left:35.55px;width:38.50px;text-align:right;top:145.06px;height:12px;line-height:12px;font-size:8.2px;color:#222;font-size:8.6px">32.59</div>
<div class="t" style="left:74.05px;width:38.50px;text-align:right;top:145.06px;height:12px;line-height:12px;font-size:8.2px;color:#222;font-size:8.6px">-2.19</div>
<div class="t" style="left:-3.20px;width:38.75px;text-align:right;top:157.94px;height:12px;line-height:12px;font-size:8.2px;color:#e8403c;font-size:8.6px">54.90</div>
<div class="t" style="left:35.55px;width:38.50px;text-align:right;top:157.94px;height:12px;line-height:12px;font-size:8.2px;color:#222;font-size:8.6px">37.15</div>
<div class="t" style="left:74.05px;width:38.50px;text-align:right;top:157.94px;height:12px;line-height:12px;font-size:8.2px;color:#222;font-size:8.6px">-2.37</div>
<div class="t" style="left:-3.20px;width:38.75px;text-align:right;top:170.81px;height:12px;line-height:12px;font-size:8.2px;color:#e8403c;font-size:8.6px">66.35</div>
<div class="t" style="left:35.55px;width:38.50px;text-align:right;top:170.81px;height:12px;line-height:12px;font-size:8.2px;color:#222;font-size:8.6px">41.72</div>
<div class="t" style="left:74.05px;width:38.50px;text-align:right;top:170.81px;height:12px;line-height:12px;font-size:8.2px;color:#222;font-size:8.6px">-2.52</div>
<div class="t" style="left:-3.20px;width:38.75px;text-align:right;top:183.68px;height:12px;line-height:12px;font-size:8.2px;color:#e8403c;font-size:8.6px">79.10</div>
<div class="t" style="left:35.55px;width:38.50px;text-align:right;top:183.68px;height:12px;line-height:12px;font-size:8.2px;color:#222;font-size:8.6px">46.22</div>
<div class="t" style="left:74.05px;width:38.50px;text-align:right;top:183.68px;height:12px;line-height:12px;font-size:8.2px;color:#222;font-size:8.6px">-2.65</div>
<div class="t" style="left:-3.20px;width:38.75px;text-align:right;top:196.55px;height:12px;line-height:12px;font-size:8.2px;color:#e8403c;font-size:8.6px">92.90</div>
<div class="t" style="left:35.55px;width:38.50px;text-align:right;top:196.55px;height:12px;line-height:12px;font-size:8.2px;color:#222;font-size:8.6px">50.58</div>
<div class="t" style="left:74.05px;width:38.50px;text-align:right;top:196.55px;height:12px;line-height:12px;font-size:8.2px;color:#222;font-size:8.6px">-2.74</div>
<div class="t" style="left:-3.20px;width:38.75px;text-align:right;top:209.41px;height:12px;line-height:12px;font-size:8.2px;color:#e8403c;font-size:8.6px">107.5</div>
<div class="t" style="left:35.55px;width:38.50px;text-align:right;top:209.41px;height:12px;line-height:12px;font-size:8.2px;color:#222;font-size:8.6px">54.9</div>
<div class="t" style="left:74.05px;width:38.50px;text-align:right;top:209.41px;height:12px;line-height:12px;font-size:8.2px;color:#222;font-size:8.6px">-2.80</div>
<div style="left:270.75px;top:28.10px;width:11.00px;height:176.20px;background:#d2d8e4"></div>
<div style="left:273.25px;top:32.70px;width:0;height:0;border-left:3px solid transparent;border-right:3px solid transparent;border-bottom:3px solid #6a7488"></div>
<div style="left:273.25px;top:195.70px;width:0;height:0;border-left:3px solid transparent;border-right:3px solid transparent;border-top:3px solid #6a7488"></div>
<div style="left:273.45px;top:79.20px;width:6.00px;height:10.70px;background:#a2aaba"></div>
</div>
<div style="left:207px;top:378px;width:12px;height:3px;background:repeating-linear-gradient(90deg,#aeb6c4 0 1px,transparent 1px 2.2px);opacity:0.75"></div>
<div style="left:0px;top:382.7px;width:233.75px;height:227.3px;overflow:hidden;background:#fff;border:1px solid #b0b9ca;border-left:none;box-sizing:border-box">
<div style="left:0.00px;top:-1.00px;width:233.75px;height:14.40px;background:#f4f6fa"></div>
<div style="left:0.00px;top:12.60px;width:233.75px;height:0.80px;background:#dde3eb"></div>
<div class="t" style="left:-12.00px;width:44.50px;text-align:center;top:0.90px;height:12px;line-height:12px;font-size:8.2px;color:#333">Delta</div>
<div class="t" style="left:28.50px;width:42.75px;text-align:center;top:0.90px;height:12px;line-height:12px;font-size:8.2px;color:#333">Theta</div>
<div class="t" style="left:67.25px;width:44.00px;text-align:center;top:0.90px;height:12px;line-height:12px;font-size:8.2px;color:#333">OrigPrice</div>
<div class="t" style="left:107.25px;width:44.25px;text-align:center;top:0.90px;height:12px;line-height:12px;font-size:8.2px;color:#333">IVChg</div>
<div class="t" style="left:147.50px;width:43.75px;text-align:center;top:0.90px;height:12px;line-height:12px;font-size:8.2px;color:#333">Model</div>
<div class="t" style="left:187.25px;width:48.50px;text-align:center;top:0.90px;height:12px;line-height:12px;font-size:8.2px;color:#333">Pos</div>
<div style="left:30.50px;top:-1.00px;width:0.90px;height:14.40px;background:#dfe4ec"></div>
<div style="left:69.25px;top:-1.00px;width:0.90px;height:14.40px;background:#dfe4ec"></div>
<div style="left:109.25px;top:-1.00px;width:0.90px;height:14.40px;background:#dfe4ec"></div>
<div style="left:149.50px;top:-1.00px;width:0.90px;height:14.40px;background:#dfe4ec"></div>
<div style="left:189.25px;top:-1.00px;width:0.90px;height:14.40px;background:#dfe4ec"></div>
<div style="left:233.75px;top:-1.00px;width:0.90px;height:14.40px;background:#dfe4ec"></div>
<div style="left:0.00px;top:13.40px;width:233.75px;height:12.87px;background:#a9c0de"></div>
<div style="left:0.00px;top:26.27px;width:233.75px;height:12.87px;background:#a9c0de"></div>
<div style="left:0.00px;top:39.14px;width:233.75px;height:12.87px;background:#a9c0de"></div>
<div style="left:0.00px;top:52.01px;width:233.75px;height:12.87px;background:#c6e3e9"></div>
<div style="left:0.00px;top:64.88px;width:233.75px;height:12.87px;background:#c6e3e9"></div>
<div style="left:0.00px;top:77.75px;width:233.75px;height:12.87px;background:#c6e3e9"></div>
<div style="left:0.00px;top:90.62px;width:233.75px;height:12.87px;background:#c6e3e9"></div>
<div style="left:0.00px;top:103.49px;width:233.75px;height:12.87px;background:#c6e3e9"></div>
<div style="left:0.00px;top:116.36px;width:233.75px;height:12.87px;background:#c6e3e9"></div>
<div style="left:0.00px;top:129.23px;width:233.75px;height:12.87px;background:#c6e3e9"></div>
<div style="left:0.00px;top:142.10px;width:233.75px;height:12.87px;background:#c6e3e9"></div>
<div style="left:0.00px;top:154.97px;width:233.75px;height:12.87px;background:#fdf8ec"></div>
<div style="left:0.00px;top:167.84px;width:233.75px;height:12.87px;background:#c6e3e9"></div>
<div style="left:0.00px;top:180.71px;width:233.75px;height:12.87px;background:#ffffff"></div>
<div style="left:0.00px;top:193.58px;width:233.75px;height:12.87px;background:#ffffff"></div>
<div style="left:0.00px;top:206.45px;width:233.75px;height:12.87px;background:#ffffff"></div>
<div style="left:0.00px;top:219.32px;width:233.75px;height:12.87px;background:#ffffff"></div>
<div style="left:150.00px;top:155.97px;width:39.25px;height:10.87px;background:#fbeeb4"></div>
<div style="left:186.25px;top:157.17px;width:1.00px;height:8.47px;background:#666"></div>
<div style="left:0.00px;top:25.77px;width:233.75px;height:1.00px;background:rgba(196,200,226,0.62)"></div>
<div style="left:0.00px;top:38.64px;width:233.75px;height:1.00px;background:rgba(196,200,226,0.62)"></div>
<div style="left:0.00px;top:51.51px;width:233.75px;height:1.00px;background:rgba(196,200,226,0.62)"></div>
<div style="left:0.00px;top:64.38px;width:233.75px;height:1.00px;background:rgba(196,200,226,0.62)"></div>
<div style="left:0.00px;top:77.25px;width:233.75px;height:1.00px;background:rgba(196,200,226,0.62)"></div>
<div style="left:0.00px;top:90.12px;width:233.75px;height:1.00px;background:rgba(196,200,226,0.62)"></div>
<div style="left:0.00px;top:102.99px;width:233.75px;height:1.00px;background:rgba(196,200,226,0.62)"></div>
<div style="left:0.00px;top:115.86px;width:233.75px;height:1.00px;background:rgba(196,200,226,0.62)"></div>
<div style="left:0.00px;top:128.73px;width:233.75px;height:1.00px;background:rgba(196,200,226,0.62)"></div>
<div style="left:0.00px;top:141.60px;width:233.75px;height:1.00px;background:rgba(196,200,226,0.62)"></div>
<div style="left:0.00px;top:154.47px;width:233.75px;height:1.00px;background:rgba(196,200,226,0.62)"></div>
<div style="left:0.00px;top:167.34px;width:233.75px;height:1.00px;background:rgba(196,200,226,0.62)"></div>
<div style="left:0.00px;top:180.21px;width:233.75px;height:1.00px;background:rgba(196,200,226,0.62)"></div>
<div style="left:0.00px;top:193.08px;width:233.75px;height:1.00px;background:rgba(196,200,226,0.62)"></div>
<div style="left:0.00px;top:205.95px;width:233.75px;height:1.00px;background:rgba(196,200,226,0.62)"></div>
<div style="left:0.00px;top:218.82px;width:233.75px;height:1.00px;background:rgba(196,200,226,0.62)"></div>
<div style="left:0.00px;top:231.69px;width:233.75px;height:1.00px;background:rgba(196,200,226,0.62)"></div>
<div style="left:30.00px;top:13.40px;width:1.00px;height:212.90px;background:rgba(196,200,226,0.62)"></div>
<div style="left:68.75px;top:13.40px;width:1.00px;height:212.90px;background:rgba(196,200,226,0.62)"></div>
<div style="left:108.75px;top:13.40px;width:1.00px;height:212.90px;background:rgba(196,200,226,0.62)"></div>
<div style="left:149.00px;top:13.40px;width:1.00px;height:212.90px;background:rgba(196,200,226,0.62)"></div>
<div style="left:188.75px;top:13.40px;width:1.00px;height:212.90px;background:rgba(196,200,226,0.62)"></div>
<div style="left:233.25px;top:13.40px;width:1.00px;height:212.90px;background:rgba(196,200,226,0.62)"></div>
<div class="t" style="left:-12.20px;width:40.50px;text-align:right;top:14.54px;height:12px;line-height:12px;font-size:8.2px;color:#222;font-size:8.6px">-23.51</div>
<div class="t" style="left:28.30px;width:38.75px;text-align:right;top:14.54px;height:12px;line-height:12px;font-size:8.2px;color:#222;font-size:8.6px">-2.12</div>
<div class="t" style="left:67.05px;width:40.00px;text-align:right;top:14.54px;height:12px;line-height:12px;font-size:8.2px;color:#222;font-size:8.6px">38.99</div>
<div class="t" style="left:107.05px;width:40.25px;text-align:right;top:14.54px;height:12px;line-height:12px;font-size:8.2px;color:#222;font-size:8.6px">1.68</div>
<div class="t" style="left:187.05px;width:44.50px;text-align:right;top:14.54px;height:12px;line-height:12px;font-size:8.2px;color:#222;font-size:8.6px">+1</div>
<div class="t" style="left:-12.20px;width:40.50px;text-align:right;top:27.41px;height:12px;line-height:12px;font-size:8.2px;color:#222;font-size:8.6px">-21.30</div>
<div class="t" style="left:28.30px;width:38.75px;text-align:right;top:27.41px;height:12px;line-height:12px;font-size:8.2px;color:#222;font-size:8.6px">-2.06</div>
<div class="t" style="left:67.05px;width:40.00px;text-align:right;top:27.41px;height:12px;line-height:12px;font-size:8.2px;color:#222;font-size:8.6px">37.65</div>
<div class="t" style="left:107.05px;width:40.25px;text-align:right;top:27.41px;height:12px;line-height:12px;font-size:8.2px;color:#222;font-size:8.6px">-0.19</div>
<div class="t" style="left:187.05px;width:44.50px;text-align:right;top:27.41px;height:12px;line-height:12px;font-size:8.2px;color:#222;font-size:8.6px">+1</div>
<div class="t" style="left:-12.20px;width:40.50px;text-align:right;top:40.28px;height:12px;line-height:12px;font-size:8.2px;color:#222;font-size:8.6px">-19.28</div>
<div class="t" style="left:28.30px;width:38.75px;text-align:right;top:40.28px;height:12px;line-height:12px;font-size:8.2px;color:#222;font-size:8.6px">-1.99</div>
<div class="t" style="left:-12.20px;width:40.50px;text-align:right;top:53.15px;height:12px;line-height:12px;font-size:8.2px;color:#222;font-size:8.6px">-17.46</div>
<div class="t" style="left:28.30px;width:38.75px;text-align:right;top:53.15px;height:12px;line-height:12px;font-size:8.2px;color:#222;font-size:8.6px">-1.92</div>
<div class="t" style="left:-12.20px;width:40.50px;text-align:right;top:66.02px;height:12px;line-height:12px;font-size:8.2px;color:#222;font-size:8.6px">-15.81</div>
<div class="t" style="left:28.30px;width:38.75px;text-align:right;top:66.02px;height:12px;line-height:12px;font-size:8.2px;color:#222;font-size:8.6px">-1.84</div>
<div class="t" style="left:67.05px;width:40.00px;text-align:right;top:66.02px;height:12px;line-height:12px;font-size:8.2px;color:#222;font-size:8.6px">29.11</div>
<div class="t" style="left:107.05px;width:40.25px;text-align:right;top:66.02px;height:12px;line-height:12px;font-size:8.2px;color:#222;font-size:8.6px">1.77</div>
<div class="t" style="left:187.05px;width:44.50px;text-align:right;top:66.02px;height:12px;line-height:12px;font-size:8.2px;color:#222;font-size:8.6px">-4</div>
<div class="t" style="left:-12.20px;width:40.50px;text-align:right;top:78.89px;height:12px;line-height:12px;font-size:8.2px;color:#222;font-size:8.6px">-14.33</div>
<div class="t" style="left:28.30px;width:38.75px;text-align:right;top:78.89px;height:12px;line-height:12px;font-size:8.2px;color:#222;font-size:8.6px">-1.77</div>
<div class="t" style="left:-12.20px;width:40.50px;text-align:right;top:91.76px;height:12px;line-height:12px;font-size:8.2px;color:#222;font-size:8.6px">-13.01</div>
<div class="t" style="left:28.30px;width:38.75px;text-align:right;top:91.76px;height:12px;line-height:12px;font-size:8.2px;color:#222;font-size:8.6px">-1.69</div>
<div class="t" style="left:-12.20px;width:40.50px;text-align:right;top:104.63px;height:12px;line-height:12px;font-size:8.2px;color:#222;font-size:8.6px">-11.81</div>
<div class="t" style="left:28.30px;width:38.75px;text-align:right;top:104.63px;height:12px;line-height:12px;font-size:8.2px;color:#222;font-size:8.6px">-1.62</div>
<div class="t" style="left:-12.20px;width:40.50px;text-align:right;top:117.50px;height:12px;line-height:12px;font-size:8.2px;color:#222;font-size:8.6px">-10.77</div>
<div class="t" style="left:28.30px;width:38.75px;text-align:right;top:117.50px;height:12px;line-height:12px;font-size:8.2px;color:#222;font-size:8.6px">-1.55</div>
<div class="t" style="left:67.05px;width:40.00px;text-align:right;top:117.50px;height:12px;line-height:12px;font-size:8.2px;color:#222;font-size:8.6px">22.14</div>
<div class="t" style="left:107.05px;width:40.25px;text-align:right;top:117.50px;height:12px;line-height:12px;font-size:8.2px;color:#222;font-size:8.6px">2.02</div>
<div class="t" style="left:187.05px;width:44.50px;text-align:right;top:117.50px;height:12px;line-height:12px;font-size:8.2px;color:#222;font-size:8.6px">+1</div>
<div class="t" style="left:-12.20px;width:40.50px;text-align:right;top:130.37px;height:12px;line-height:12px;font-size:8.2px;color:#222;font-size:8.6px">-9.80</div>
<div class="t" style="left:28.30px;width:38.75px;text-align:right;top:130.37px;height:12px;line-height:12px;font-size:8.2px;color:#222;font-size:8.6px">-1.48</div>
<div class="t" style="left:67.05px;width:40.00px;text-align:right;top:130.37px;height:12px;line-height:12px;font-size:8.2px;color:#222;font-size:8.6px">28.90</div>
<div class="t" style="left:107.05px;width:40.25px;text-align:right;top:130.37px;height:12px;line-height:12px;font-size:8.2px;color:#222;font-size:8.6px">-0.60</div>
<div class="t" style="left:147.30px;width:39.75px;text-align:right;top:130.37px;height:12px;line-height:12px;font-size:8.2px;color:#222;font-size:8.6px">-1</div>
<div class="t" style="left:187.05px;width:44.50px;text-align:right;top:130.37px;height:12px;line-height:12px;font-size:8.2px;color:#222;font-size:8.6px">+1</div>
<div class="t" style="left:-12.20px;width:40.50px;text-align:right;top:143.23px;height:12px;line-height:12px;font-size:8.2px;color:#222;font-size:8.6px">-8.96</div>
<div class="t" style="left:28.30px;width:38.75px;text-align:right;top:143.23px;height:12px;line-height:12px;font-size:8.2px;color:#222;font-size:8.6px">-1.42</div>
<div class="t" style="left:147.30px;width:39.75px;text-align:right;top:143.23px;height:12px;line-height:12px;font-size:8.2px;color:#222;font-size:8.6px">+1</div>
<div class="t" style="left:-12.20px;width:40.50px;text-align:right;top:156.11px;height:12px;line-height:12px;font-size:8.2px;color:#222;font-size:8.6px">-8.19</div>
<div class="t" style="left:28.30px;width:38.75px;text-align:right;top:156.11px;height:12px;line-height:12px;font-size:8.2px;color:#222;font-size:8.6px">-1.36</div>
<div class="t" style="left:-12.20px;width:40.50px;text-align:right;top:168.97px;height:12px;line-height:12px;font-size:8.2px;color:#222;font-size:8.6px">-7.52</div>
<div class="t" style="left:28.30px;width:38.75px;text-align:right;top:168.97px;height:12px;line-height:12px;font-size:8.2px;color:#222;font-size:8.6px">-1.30</div>
<div class="t" style="left:-12.20px;width:40.50px;text-align:right;top:181.85px;height:12px;line-height:12px;font-size:8.2px;color:#222;font-size:8.6px">-6.91</div>
<div class="t" style="left:28.30px;width:38.75px;text-align:right;top:181.85px;height:12px;line-height:12px;font-size:8.2px;color:#222;font-size:8.6px">-1.25</div>
<div class="t" style="left:-12.20px;width:40.50px;text-align:right;top:194.71px;height:12px;line-height:12px;font-size:8.2px;color:#222;font-size:8.6px">-6.35</div>
<div class="t" style="left:28.30px;width:38.75px;text-align:right;top:194.71px;height:12px;line-height:12px;font-size:8.2px;color:#222;font-size:8.6px">-1.19</div>
<div class="t" style="left:-12.20px;width:40.50px;text-align:right;top:207.58px;height:12px;line-height:12px;font-size:8.2px;color:#222;font-size:8.6px">-3.82</div>
<div class="t" style="left:28.30px;width:38.75px;text-align:right;top:207.58px;height:12px;line-height:12px;font-size:8.2px;color:#222;font-size:8.6px">-0.72</div>
<div class="t" style="left:-12.20px;width:40.50px;text-align:right;top:220.45px;height:12px;line-height:12px;font-size:8.2px;color:#222;font-size:8.6px">-2.55</div>
<div class="t" style="left:28.30px;width:38.75px;text-align:right;top:220.45px;height:12px;line-height:12px;font-size:8.2px;color:#222;font-size:8.6px">-0.70</div>
</div>
<div style="left:236.25px;top:382.7px;width:283.75px;height:227.3px;overflow:hidden;background:#fff;border:1px solid #b0b9ca;box-sizing:border-box">
<div style="left:-1.00px;top:-1.00px;width:283.75px;height:14.40px;background:#f4f6fa"></div>
<div style="left:-1.00px;top:12.60px;width:283.75px;height:0.80px;background:#dde3eb"></div>
<div class="t" style="left:-3.00px;width:42.75px;text-align:center;top:0.90px;height:12px;line-height:12px;font-size:8.2px;color:#333">Mid</div>
<div class="t" style="left:35.75px;width:42.50px;text-align:center;top:0.90px;height:12px;line-height:12px;font-size:8.2px;color:#333">Delta</div>
<div class="t" style="left:74.25px;width:42.50px;text-align:center;top:0.90px;height:12px;line-height:12px;font-size:8.2px;color:#333">Theta</div>
<div class="t" style="left:112.75px;width:42.50px;text-align:center;top:0.90px;height:12px;line-height:12px;font-size:8.2px;color:#333">OrigPrice</div>
<div class="t" style="left:151.25px;width:42.50px;text-align:center;top:0.90px;height:12px;line-height:12px;font-size:8.2px;color:#333">IVChg</div>
<div class="t" style="left:189.75px;width:42.30px;text-align:center;top:0.90px;height:12px;line-height:12px;font-size:8.2px;color:#333">Model</div>
<div class="t" style="left:228.05px;width:44.70px;text-align:center;top:0.90px;height:12px;line-height:12px;font-size:8.2px;color:#333">Pos</div>
<div style="left:37.75px;top:-1.00px;width:0.90px;height:14.40px;background:#dfe4ec"></div>
<div style="left:76.25px;top:-1.00px;width:0.90px;height:14.40px;background:#dfe4ec"></div>
<div style="left:114.75px;top:-1.00px;width:0.90px;height:14.40px;background:#dfe4ec"></div>
<div style="left:153.25px;top:-1.00px;width:0.90px;height:14.40px;background:#dfe4ec"></div>
<div style="left:191.75px;top:-1.00px;width:0.90px;height:14.40px;background:#dfe4ec"></div>
<div style="left:230.05px;top:-1.00px;width:0.90px;height:14.40px;background:#dfe4ec"></div>
<div style="left:270.75px;top:-1.00px;width:0.90px;height:14.40px;background:#dfe4ec"></div>
<div style="left:-1.00px;top:13.40px;width:283.75px;height:12.87px;background:#a9c0de"></div>
<div style="left:-1.00px;top:26.27px;width:283.75px;height:12.87px;background:#a9c0de"></div>
<div style="left:-1.00px;top:39.14px;width:283.75px;height:12.87px;background:#a9c0de"></div>
<div style="left:-1.00px;top:52.01px;width:283.75px;height:12.87px;background:#c6e3e9"></div>
<div style="left:-1.00px;top:64.88px;width:283.75px;height:12.87px;background:#c6e3e9"></div>
<div style="left:-1.00px;top:77.75px;width:283.75px;height:12.87px;background:#c6e3e9"></div>
<div style="left:-1.00px;top:90.62px;width:283.75px;height:12.87px;background:#c6e3e9"></div>
<div style="left:-1.00px;top:103.49px;width:283.75px;height:12.87px;background:#c6e3e9"></div>
<div style="left:-1.00px;top:116.36px;width:283.75px;height:12.87px;background:#c6e3e9"></div>
<div style="left:-1.00px;top:129.23px;width:283.75px;height:12.87px;background:#c6e3e9"></div>
<div style="left:-1.00px;top:142.10px;width:283.75px;height:12.87px;background:#c6e3e9"></div>
<div style="left:-1.00px;top:154.97px;width:283.75px;height:12.87px;background:#fdf8ec"></div>
<div style="left:-1.00px;top:167.84px;width:283.75px;height:12.87px;background:#c6e3e9"></div>
<div style="left:-1.00px;top:180.71px;width:283.75px;height:12.87px;background:#c6e3e9"></div>
<div style="left:-1.00px;top:193.58px;width:283.75px;height:12.87px;background:#ffffff"></div>
<div style="left:-1.00px;top:206.45px;width:283.75px;height:12.87px;background:#ffffff"></div>
<div style="left:-1.00px;top:219.32px;width:283.75px;height:12.87px;background:#ffffff"></div>
<div style="left:-1.00px;top:25.77px;width:271.75px;height:1.00px;background:rgba(196,200,226,0.62)"></div>
<div style="left:-1.00px;top:38.64px;width:271.75px;height:1.00px;background:rgba(196,200,226,0.62)"></div>
<div style="left:-1.00px;top:51.51px;width:271.75px;height:1.00px;background:rgba(196,200,226,0.62)"></div>
<div style="left:-1.00px;top:64.38px;width:271.75px;height:1.00px;background:rgba(196,200,226,0.62)"></div>
<div style="left:-1.00px;top:77.25px;width:271.75px;height:1.00px;background:rgba(196,200,226,0.62)"></div>
<div style="left:-1.00px;top:90.12px;width:271.75px;height:1.00px;background:rgba(196,200,226,0.62)"></div>
<div style="left:-1.00px;top:102.99px;width:271.75px;height:1.00px;background:rgba(196,200,226,0.62)"></div>
<div style="left:-1.00px;top:115.86px;width:271.75px;height:1.00px;background:rgba(196,200,226,0.62)"></div>
<div style="left:-1.00px;top:128.73px;width:271.75px;height:1.00px;background:rgba(196,200,226,0.62)"></div>
<div style="left:-1.00px;top:141.60px;width:271.75px;height:1.00px;background:rgba(196,200,226,0.62)"></div>
<div style="left:-1.00px;top:154.47px;width:271.75px;height:1.00px;background:rgba(196,200,226,0.62)"></div>
<div style="left:-1.00px;top:167.34px;width:271.75px;height:1.00px;background:rgba(196,200,226,0.62)"></div>
<div style="left:-1.00px;top:180.21px;width:271.75px;height:1.00px;background:rgba(196,200,226,0.62)"></div>
<div style="left:-1.00px;top:193.08px;width:271.75px;height:1.00px;background:rgba(196,200,226,0.62)"></div>
<div style="left:-1.00px;top:205.95px;width:271.75px;height:1.00px;background:rgba(196,200,226,0.62)"></div>
<div style="left:-1.00px;top:218.82px;width:271.75px;height:1.00px;background:rgba(196,200,226,0.62)"></div>
<div style="left:-1.00px;top:231.69px;width:271.75px;height:1.00px;background:rgba(196,200,226,0.62)"></div>
<div style="left:37.25px;top:13.40px;width:1.00px;height:212.90px;background:rgba(196,200,226,0.62)"></div>
<div style="left:75.75px;top:13.40px;width:1.00px;height:212.90px;background:rgba(196,200,226,0.62)"></div>
<div style="left:114.25px;top:13.40px;width:1.00px;height:212.90px;background:rgba(196,200,226,0.62)"></div>
<div style="left:152.75px;top:13.40px;width:1.00px;height:212.90px;background:rgba(196,200,226,0.62)"></div>
<div style="left:191.25px;top:13.40px;width:1.00px;height:212.90px;background:rgba(196,200,226,0.62)"></div>
<div style="left:229.55px;top:13.40px;width:1.00px;height:212.90px;background:rgba(196,200,226,0.62)"></div>
<div style="left:270.25px;top:13.40px;width:1.00px;height:212.90px;background:rgba(196,200,226,0.62)"></div>
<div class="t" style="left:-3.20px;width:38.75px;text-align:right;top:14.54px;height:12px;line-height:12px;font-size:8.2px;color:#359535;font-size:8.6px">43.00</div>
<div class="t" style="left:35.55px;width:38.50px;text-align:right;top:14.54px;height:12px;line-height:12px;font-size:8.2px;color:#222;font-size:8.6px">-24.09</div>
<div class="t" style="left:74.05px;width:38.50px;text-align:right;top:14.54px;height:12px;line-height:12px;font-size:8.2px;color:#222;font-size:8.6px">-2.10</div>
<div class="t" style="left:-3.20px;width:38.75px;text-align:right;top:27.41px;height:12px;line-height:12px;font-size:8.2px;color:#359535;font-size:8.6px">38.80</div>
<div class="t" style="left:35.55px;width:38.50px;text-align:right;top:27.41px;height:12px;line-height:12px;font-size:8.2px;color:#222;font-size:8.6px">-21.91</div>
<div class="t" style="left:74.05px;width:38.50px;text-align:right;top:27.41px;height:12px;line-height:12px;font-size:8.2px;color:#222;font-size:8.6px">-2.05</div>
<div class="t" style="left:-3.20px;width:38.75px;text-align:right;top:40.28px;height:12px;line-height:12px;font-size:8.2px;color:#359535;font-size:8.6px">35.00</div>
<div class="t" style="left:35.55px;width:38.50px;text-align:right;top:40.28px;height:12px;line-height:12px;font-size:8.2px;color:#222;font-size:8.6px">-19.92</div>
<div class="t" style="left:74.05px;width:38.50px;text-align:right;top:40.28px;height:12px;line-height:12px;font-size:8.2px;color:#222;font-size:8.6px">-1.98</div>
<div class="t" style="left:-3.20px;width:38.75px;text-align:right;top:53.15px;height:12px;line-height:12px;font-size:8.2px;color:#359535;font-size:8.6px">31.60</div>
<div class="t" style="left:35.55px;width:38.50px;text-align:right;top:53.15px;height:12px;line-height:12px;font-size:8.2px;color:#222;font-size:8.6px">-18.10</div>
<div class="t" style="left:74.05px;width:38.50px;text-align:right;top:53.15px;height:12px;line-height:12px;font-size:8.2px;color:#222;font-size:8.6px">-1.92</div>
<div class="t" style="left:-3.20px;width:38.75px;text-align:right;top:66.02px;height:12px;line-height:12px;font-size:8.2px;color:#359535;font-size:8.6px">28.55</div>
<div class="t" style="left:35.55px;width:38.50px;text-align:right;top:66.02px;height:12px;line-height:12px;font-size:8.2px;color:#222;font-size:8.6px">-16.44</div>
<div class="t" style="left:74.05px;width:38.50px;text-align:right;top:66.02px;height:12px;line-height:12px;font-size:8.2px;color:#222;font-size:8.6px">-1.85</div>
<div class="t" style="left:-3.20px;width:38.75px;text-align:right;top:78.89px;height:12px;line-height:12px;font-size:8.2px;color:#359535;font-size:8.6px">25.90</div>
<div class="t" style="left:35.55px;width:38.50px;text-align:right;top:78.89px;height:12px;line-height:12px;font-size:8.2px;color:#222;font-size:8.6px">-14.97</div>
<div class="t" style="left:74.05px;width:38.50px;text-align:right;top:78.89px;height:12px;line-height:12px;font-size:8.2px;color:#222;font-size:8.6px">-1.78</div>
<div class="t" style="left:-3.20px;width:38.75px;text-align:right;top:91.76px;height:12px;line-height:12px;font-size:8.2px;color:#359535;font-size:8.6px">23.50</div>
<div class="t" style="left:35.55px;width:38.50px;text-align:right;top:91.76px;height:12px;line-height:12px;font-size:8.2px;color:#222;font-size:8.6px">-13.62</div>
<div class="t" style="left:74.05px;width:38.50px;text-align:right;top:91.76px;height:12px;line-height:12px;font-size:8.2px;color:#222;font-size:8.6px">-1.71</div>
<div class="t" style="left:-3.20px;width:38.75px;text-align:right;top:104.63px;height:12px;line-height:12px;font-size:8.2px;color:#359535;font-size:8.6px">21.40</div>
<div class="t" style="left:35.55px;width:38.50px;text-align:right;top:104.63px;height:12px;line-height:12px;font-size:8.2px;color:#222;font-size:8.6px">-12.42</div>
<div class="t" style="left:74.05px;width:38.50px;text-align:right;top:104.63px;height:12px;line-height:12px;font-size:8.2px;color:#222;font-size:8.6px">-1.64</div>
<div class="t" style="left:-3.20px;width:38.75px;text-align:right;top:117.50px;height:12px;line-height:12px;font-size:8.2px;color:#359535;font-size:8.6px">19.55</div>
<div class="t" style="left:35.55px;width:38.50px;text-align:right;top:117.50px;height:12px;line-height:12px;font-size:8.2px;color:#222;font-size:8.6px">-11.34</div>
<div class="t" style="left:74.05px;width:38.50px;text-align:right;top:117.50px;height:12px;line-height:12px;font-size:8.2px;color:#222;font-size:8.6px">-1.57</div>
<div class="t" style="left:-3.20px;width:38.75px;text-align:right;top:130.37px;height:12px;line-height:12px;font-size:8.2px;color:#359535;font-size:8.6px">17.90</div>
<div class="t" style="left:35.55px;width:38.50px;text-align:right;top:130.37px;height:12px;line-height:12px;font-size:8.2px;color:#222;font-size:8.6px">-10.37</div>
<div class="t" style="left:74.05px;width:38.50px;text-align:right;top:130.37px;height:12px;line-height:12px;font-size:8.2px;color:#222;font-size:8.6px">-1.51</div>
<div class="t" style="left:-3.20px;width:38.75px;text-align:right;top:143.23px;height:12px;line-height:12px;font-size:8.2px;color:#359535;font-size:8.6px">16.40</div>
<div class="t" style="left:35.55px;width:38.50px;text-align:right;top:143.23px;height:12px;line-height:12px;font-size:8.2px;color:#222;font-size:8.6px">-9.49</div>
<div class="t" style="left:74.05px;width:38.50px;text-align:right;top:143.23px;height:12px;line-height:12px;font-size:8.2px;color:#222;font-size:8.6px">-1.44</div>
<div class="t" style="left:-3.20px;width:38.75px;text-align:right;top:156.11px;height:12px;line-height:12px;font-size:8.2px;color:#359535;font-size:8.6px">15.10</div>
<div class="t" style="left:35.55px;width:38.50px;text-align:right;top:156.11px;height:12px;line-height:12px;font-size:8.2px;color:#222;font-size:8.6px">-8.70</div>
<div class="t" style="left:74.05px;width:38.50px;text-align:right;top:156.11px;height:12px;line-height:12px;font-size:8.2px;color:#222;font-size:8.6px">-1.39</div>
<div class="t" style="left:-3.20px;width:38.75px;text-align:right;top:168.97px;height:12px;line-height:12px;font-size:8.2px;color:#359535;font-size:8.6px">13.95</div>
<div class="t" style="left:35.55px;width:38.50px;text-align:right;top:168.97px;height:12px;line-height:12px;font-size:8.2px;color:#222;font-size:8.6px">-8.01</div>
<div class="t" style="left:74.05px;width:38.50px;text-align:right;top:168.97px;height:12px;line-height:12px;font-size:8.2px;color:#222;font-size:8.6px">-1.33</div>
<div class="t" style="left:-3.20px;width:38.75px;text-align:right;top:181.85px;height:12px;line-height:12px;font-size:8.2px;color:#359535;font-size:8.6px">12.95</div>
<div class="t" style="left:35.55px;width:38.50px;text-align:right;top:181.85px;height:12px;line-height:12px;font-size:8.2px;color:#222;font-size:8.6px">-7.39</div>
<div class="t" style="left:74.05px;width:38.50px;text-align:right;top:181.85px;height:12px;line-height:12px;font-size:8.2px;color:#222;font-size:8.6px">-1.28</div>
<div class="t" style="left:-3.20px;width:38.75px;text-align:right;top:194.71px;height:12px;line-height:12px;font-size:8.2px;color:#359535;font-size:8.6px">11.95</div>
<div class="t" style="left:35.55px;width:38.50px;text-align:right;top:194.71px;height:12px;line-height:12px;font-size:8.2px;color:#222;font-size:8.6px">-6.79</div>
<div class="t" style="left:74.05px;width:38.50px;text-align:right;top:194.71px;height:12px;line-height:12px;font-size:8.2px;color:#222;font-size:8.6px">-1.22</div>
<div class="t" style="left:-3.20px;width:38.75px;text-align:right;top:207.58px;height:12px;line-height:12px;font-size:8.2px;color:#359535;font-size:8.6px">11.15</div>
<div class="t" style="left:35.55px;width:38.50px;text-align:right;top:207.58px;height:12px;line-height:12px;font-size:8.2px;color:#222;font-size:8.6px">-6.29</div>
<div class="t" style="left:74.05px;width:38.50px;text-align:right;top:207.58px;height:12px;line-height:12px;font-size:8.2px;color:#222;font-size:8.6px">-1.18</div>
<div class="t" style="left:-3.20px;width:38.75px;text-align:right;top:220.45px;height:12px;line-height:12px;font-size:8.2px;color:#359535;font-size:8.6px">10.25</div>
<div class="t" style="left:35.55px;width:38.50px;text-align:right;top:220.45px;height:12px;line-height:12px;font-size:8.2px;color:#222;font-size:8.6px">-5.80</div>
<div class="t" style="left:74.05px;width:38.50px;text-align:right;top:220.45px;height:12px;line-height:12px;font-size:8.2px;color:#222;font-size:8.6px">-1.13</div>
<div style="left:270.75px;top:13.40px;width:11.00px;height:212.90px;background:#d2d8e4"></div>
<div style="left:273.25px;top:17.40px;width:0;height:0;border-left:3px solid transparent;border-right:3px solid transparent;border-bottom:3px solid #6a7488"></div>
<div style="left:273.25px;top:218.40px;width:0;height:0;border-left:3px solid transparent;border-right:3px solid transparent;border-top:3px solid #6a7488"></div>
<div style="left:273.45px;top:91.80px;width:6.00px;height:10.70px;background:#a2aaba"></div>
</div>
<div style="left:207px;top:613.5px;width:12px;height:3px;background:repeating-linear-gradient(90deg,#aeb6c4 0 1px,transparent 1px 2.2px);opacity:0.75"></div>
<div style="left:523.5px;top:388px;width:3px;height:12px;background:repeating-linear-gradient(0deg,#aeb6c4 0 1px,transparent 1px 2.2px);opacity:0.75"></div>
<div style="left:-5px;top:619.6px;width:72.5px;height:12.6px;background:#fff;border:1px solid #a6b0c0;box-sizing:border-box"></div>
<div class="t" style="left:0.00px;top:621.20px;height:12px;line-height:12px;font-size:8.2px;color:#222">ed</div>
<div style="left:60px;top:624.5px;width:0;height:0;border-left:2.5px solid transparent;border-right:2.5px solid transparent;border-top:3px solid #444"></div>
<div style="left:73.8px;top:619.6px;width:53.5px;height:12.6px;background:#fff;border:1px solid #a6b0c0;box-sizing:border-box"></div>
<div class="t" style="left:77.00px;top:621.20px;height:12px;line-height:12px;font-size:8.2px;color:#222">Auto</div>
<div style="left:119.5px;top:624.5px;width:0;height:0;border-left:2.5px solid transparent;border-right:2.5px solid transparent;border-top:3px solid #444"></div>
<div style="left:424.4px;top:621.7px;width:8px;height:8.3px;background:#fff;border:1px solid #8a94a4;box-sizing:border-box"></div>
<div class="t" style="left:435.50px;top:620.70px;height:12px;line-height:12px;font-size:8.2px;color:#333">Ignore Today's Trades</div>
<div style="left:-3.00px;top:635.40px;width:524.00px;height:45.00px;background:#fff;border:1px solid #bfc7d4;box-sizing:border-box"></div>
<div style="left:0.00px;top:636.40px;width:520.00px;height:12.60px;background:#f4f6fa"></div>
<div style="left:47.00px;top:637.00px;width:0.90px;height:38.00px;background:#dde2ea"></div>
<div style="left:94.50px;top:637.00px;width:0.90px;height:38.00px;background:#dde2ea"></div>
<div style="left:141.60px;top:637.00px;width:0.90px;height:38.00px;background:#dde2ea"></div>
<div style="left:189.00px;top:637.00px;width:0.90px;height:38.00px;background:#dde2ea"></div>
<div style="left:236.30px;top:637.00px;width:0.90px;height:38.00px;background:#dde2ea"></div>
<div style="left:283.60px;top:637.00px;width:0.90px;height:38.00px;background:#dde2ea"></div>
<div style="left:331.40px;top:637.00px;width:0.90px;height:38.00px;background:#dde2ea"></div>
<div style="left:378.60px;top:637.00px;width:0.90px;height:38.00px;background:#dde2ea"></div>
<div style="left:425.80px;top:637.00px;width:0.90px;height:38.00px;background:#dde2ea"></div>
<div style="left:473.60px;top:637.00px;width:0.90px;height:38.00px;background:#dde2ea"></div>
<div style="left:0.00px;top:649.00px;width:520.00px;height:0.90px;background:#dde2ea"></div>
<div style="left:0.00px;top:662.00px;width:520.00px;height:0.90px;background:#dde2ea"></div>
<div class="t" style="left:-4.50px;width:56.00px;text-align:center;top:637.50px;height:12px;line-height:12px;font-size:8.2px;color:#333">Cost</div>
<div class="t" style="left:44.00px;width:53.50px;text-align:center;top:637.50px;height:12px;line-height:12px;font-size:8.2px;color:#333">Curr Cost</div>
<div class="t" style="left:91.50px;width:53.10px;text-align:center;top:637.50px;height:12px;line-height:12px;font-size:8.2px;color:#333">Commission</div>
<div class="t" style="left:138.60px;width:53.40px;text-align:center;top:637.50px;height:12px;line-height:12px;font-size:8.2px;color:#333">PnL</div>
<div class="t" style="left:186.00px;width:53.30px;text-align:center;top:637.50px;height:12px;line-height:12px;font-size:8.2px;color:#333">PnL%</div>
<div class="t" style="left:233.30px;width:53.30px;text-align:center;top:637.50px;height:12px;line-height:12px;font-size:8.2px;color:#333">Delta</div>
<div class="t" style="left:280.60px;width:53.80px;text-align:center;top:637.50px;height:12px;line-height:12px;font-size:8.2px;color:#333">Gamma</div>
<div class="t" style="left:328.40px;width:53.20px;text-align:center;top:637.50px;height:12px;line-height:12px;font-size:8.2px;color:#333">Theta</div>
<div class="t" style="left:375.60px;width:53.20px;text-align:center;top:637.50px;height:12px;line-height:12px;font-size:8.2px;color:#333">Vega</div>
<div class="t" style="left:422.80px;width:53.80px;text-align:center;top:637.50px;height:12px;line-height:12px;font-size:8.2px;color:#333">T/D</div>
<div class="t" style="left:470.60px;width:53.40px;text-align:center;top:637.50px;height:12px;line-height:12px;font-size:8.2px;color:#333">Plot</div>
<div class="t" style="left:-5.20px;width:50.00px;text-align:right;top:650.40px;height:12px;line-height:12px;font-size:8.2px;color:#222;font-size:8.6px">-54.42</div>
<div class="t" style="left:42.30px;width:50.00px;text-align:right;top:650.40px;height:12px;line-height:12px;font-size:8.2px;color:#222;font-size:8.6px">520.00</div>
<div class="t" style="left:89.40px;width:50.00px;text-align:right;top:650.40px;height:12px;line-height:12px;font-size:8.2px;color:#222;font-size:8.6px">14.40</div>
<div class="t" style="left:136.80px;width:50.00px;text-align:right;top:650.40px;height:12px;line-height:12px;font-size:8.2px;color:#359535;font-size:8.6px">465.58</div>
<div class="t" style="left:184.10px;width:50.00px;text-align:right;top:650.40px;height:12px;line-height:12px;font-size:8.2px;color:#359535;font-size:8.6px">78.96%</div>
<div class="t" style="left:231.40px;width:50.00px;text-align:right;top:650.40px;height:12px;line-height:12px;font-size:8.2px;color:#222;font-size:8.6px">-2.14</div>
<div class="t" style="left:279.20px;width:50.00px;text-align:right;top:650.40px;height:12px;line-height:12px;font-size:8.2px;color:#222;font-size:8.6px">0.00</div>
<div class="t" style="left:326.40px;width:50.00px;text-align:right;top:650.40px;height:12px;line-height:12px;font-size:8.2px;color:#222;font-size:8.6px">15.23</div>
<div class="t" style="left:373.60px;width:50.00px;text-align:right;top:650.40px;height:12px;line-height:12px;font-size:8.2px;color:#222;font-size:8.6px">-14.78</div>
<div class="t" style="left:421.40px;width:50.00px;text-align:right;top:650.40px;height:12px;line-height:12px;font-size:8.2px;color:#222;font-size:8.6px">7.1</div>
<div style="left:492px;top:651.40px;width:8.5px;height:8.5px;background:#fff;border:1px solid #8a94a4;box-sizing:border-box"></div>
<div class="t" style="left:491.30px;width:10.00px;text-align:center;top:650.10px;height:12px;line-height:12px;font-size:8px;color:#333">&#10003;</div>
<div class="t" style="left:-5.20px;width:50.00px;text-align:right;top:663.30px;height:12px;line-height:12px;font-size:8.2px;color:#222;font-size:8.6px">78.18</div>
<div class="t" style="left:42.30px;width:50.00px;text-align:right;top:663.30px;height:12px;line-height:12px;font-size:8.2px;color:#222;font-size:8.6px">385.00</div>
<div class="t" style="left:89.40px;width:50.00px;text-align:right;top:663.30px;height:12px;line-height:12px;font-size:8.2px;color:#222;font-size:8.6px">16.80</div>
<div class="t" style="left:136.80px;width:50.00px;text-align:right;top:663.30px;height:12px;line-height:12px;font-size:8.2px;color:#359535;font-size:8.6px">463.18</div>
<div class="t" style="left:184.10px;width:50.00px;text-align:right;top:663.30px;height:12px;line-height:12px;font-size:8.2px;color:#359535;font-size:8.6px">6.24%</div>
<div class="t" style="left:231.40px;width:50.00px;text-align:right;top:663.30px;height:12px;line-height:12px;font-size:8.2px;color:#222;font-size:8.6px">-1.29</div>
<div class="t" style="left:279.20px;width:50.00px;text-align:right;top:663.30px;height:12px;line-height:12px;font-size:8.2px;color:#222;font-size:8.6px">0.00</div>
<div class="t" style="left:326.40px;width:50.00px;text-align:right;top:663.30px;height:12px;line-height:12px;font-size:8.2px;color:#222;font-size:8.6px">21.49</div>
<div class="t" style="left:373.60px;width:50.00px;text-align:right;top:663.30px;height:12px;line-height:12px;font-size:8.2px;color:#222;font-size:8.6px">-31.88</div>
<div class="t" style="left:421.40px;width:50.00px;text-align:right;top:663.30px;height:12px;line-height:12px;font-size:8.2px;color:#222;font-size:8.6px">16.7</div>
<div style="left:492px;top:664.30px;width:8.5px;height:8.5px;background:#fff;border:1px solid #8a94a4;box-sizing:border-box"></div>
<div class="t" style="left:491.30px;width:10.00px;text-align:center;top:663.00px;height:12px;line-height:12px;font-size:8px;color:#333">&#10003;</div>
<div style="left:529.00px;top:111.00px;width:1.20px;height:564.00px;background:#b4bccc"></div>
<div style="left:529.70px;top:111.00px;width:551.00px;height:547.00px;background:#d3d9e6"></div>
<div style="left:529.70px;top:130.00px;width:551.00px;height:0.90px;background:#aab3c2"></div>
<div style="left:530.00px;top:112.50px;width:51.00px;height:18.50px;background:#d3d9e6;border:1px solid #aab3c2;border-bottom:none;box-sizing:border-box"></div>
<div class="t" style="left:525.00px;width:61.00px;text-align:center;top:116.20px;height:12px;line-height:12px;font-size:8.2px;color:#333">Risk Chart</div>
<div style="left:581.00px;top:113.00px;width:54.50px;height:17.00px;background:#cdd4e2;border:1px solid #aab3c2;box-sizing:border-box"></div>
<div class="t" style="left:576.00px;width:64.50px;text-align:center;top:116.20px;height:12px;line-height:12px;font-size:8.2px;color:#333">Price Chart</div>
<div style="left:635.50px;top:113.00px;width:84.80px;height:17.00px;background:#cdd4e2;border:1px solid #aab3c2;box-sizing:border-box"></div>
<div class="t" style="left:630.50px;width:94.80px;text-align:center;top:116.20px;height:12px;line-height:12px;font-size:8.2px;color:#333">Movement Analysis</div>
<div style="left:720.30px;top:113.00px;width:45.10px;height:17.00px;background:#cdd4e2;border:1px solid #aab3c2;box-sizing:border-box"></div>
<div class="t" style="left:715.30px;width:55.10px;text-align:center;top:116.20px;height:12px;line-height:12px;font-size:8.2px;color:#333">Volatility</div>
<div style="left:765.40px;top:113.00px;width:108.80px;height:17.00px;background:#cdd4e2;border:1px solid #aab3c2;box-sizing:border-box"></div>
<div class="t" style="left:760.40px;width:118.80px;text-align:center;top:116.20px;height:12px;line-height:12px;font-size:8.2px;color:#333">Statistics &amp; Fundamentals</div>
<div class="t" style="left:534.50px;top:133.70px;height:12px;line-height:12px;font-size:8.2px;color:#333">Vol Adjust</div>
<div style="left:575.5px;top:132.5px;width:35.8px;height:12.5px;background:#fff;border:1px solid #b4bcc8;box-sizing:border-box;border-radius:1px"></div>
<div class="t" style="left:578.50px;width:20.00px;text-align:right;top:133.70px;height:12px;line-height:12px;font-size:8.2px;color:#222">0</div>
<div style="left:603.5px;top:134.3px;width:0;height:0;border-left:2.5px solid transparent;border-right:2.5px solid transparent;border-bottom:2.5px solid #555"></div>
<div style="left:603.5px;top:140.5px;width:0;height:0;border-left:2.5px solid transparent;border-right:2.5px solid transparent;border-top:2.5px solid #555"></div>
<div class="t" style="left:1017.00px;top:133.70px;height:12px;line-height:12px;font-size:8.2px;color:#333">Projection</div>
<div style="left:1057.6px;top:132.5px;width:30px;height:12.5px;background:#fff;border:1px solid #b4bcc8;box-sizing:border-box"></div>
<div class="t" style="left:1060.00px;top:133.70px;height:12px;line-height:12px;font-size:8.2px;color:#222">13/11</div>
<div style="left:530.00px;top:147.50px;width:550.00px;height:511.20px;background:#fff"></div>
<div style="left:530.00px;top:658.70px;width:550.00px;height:16.30px;background:#283652"></div>
<div class="t" style="left:1062.00px;top:662.00px;height:12px;line-height:12px;font-size:8.2px;color:#e8ecf2">360%</div>
<svg style="position:absolute;left:529px;top:111px" width="551" height="564" viewBox="529 111 551 564" font-family="Liberation Sans"><rect x="849.6" y="159.6" width="212.4" height="357.19999999999993" fill="#92cada"/><rect x="903.8" y="159.6" width="104.7" height="357.19999999999993" fill="#4e80bd"/><line x1="568" y1="159.60" x2="1080" y2="159.60" stroke="#e2e5ea" stroke-width="0.9"/><line x1="849.6" y1="159.60" x2="1062" y2="159.60" stroke="#d8e8f0" stroke-opacity="0.55" stroke-width="0.9"/><line x1="568" y1="178.40" x2="1080" y2="178.40" stroke="#e2e5ea" stroke-width="0.9"/><line x1="849.6" y1="178.40" x2="1062" y2="178.40" stroke="#d8e8f0" stroke-opacity="0.55" stroke-width="0.9"/><line x1="568" y1="197.20" x2="1080" y2="197.20" stroke="#e2e5ea" stroke-width="0.9"/><line x1="849.6" y1="197.20" x2="1062" y2="197.20" stroke="#d8e8f0" stroke-opacity="0.55" stroke-width="0.9"/><line x1="568" y1="216.00" x2="1080" y2="216.00" stroke="#e2e5ea" stroke-width="0.9"/><line x1="849.6" y1="216.00" x2="1062" y2="216.00" stroke="#d8e8f0" stroke-opacity="0.55" stroke-width="0.9"/><line x1="568" y1="234.80" x2="1080" y2="234.80" stroke="#e2e5ea" stroke-width="0.9"/><line x1="849.6" y1="234.80" x2="1062" y2="234.80" stroke="#d8e8f0" stroke-opacity="0.55" stroke-width="0.9"/><line x1="568" y1="253.60" x2="1080" y2="253.60" stroke="#e2e5ea" stroke-width="0.9"/><line x1="849.6" y1="253.60" x2="1062" y2="253.60" stroke="#d8e8f0" stroke-opacity="0.55" stroke-width="0.9"/><line x1="568" y1="272.40" x2="1080" y2="272.40" stroke="#e2e5ea" stroke-width="0.9"/><line x1="849.6" y1="272.40" x2="1062" y2="272.40" stroke="#d8e8f0" stroke-opacity="0.55" stroke-width="0.9"/><line x1="568" y1="291.20" x2="1080" y2="291.20" stroke="#e2e5ea" stroke-width="0.9"/><line x1="849.6" y1="291.20" x2="1062" y2="291.20" stroke="#d8e8f0" stroke-opacity="0.55" stroke-width="0.9"/><line x1="568" y1="310.00" x2="1080" y2="310.00" stroke="#e2e5ea" stroke-width="0.9"/><line x1="849.6" y1="310.00" x2="1062" y2="310.00" stroke="#d8e8f0" stroke-opacity="0.55" stroke-width="0.9"/><line x1="568" y1="328.80" x2="1080" y2="328.80" stroke="#e2e5ea" stroke-width="0.9"/><line x1="849.6" y1="328.80" x2="1062" y2="328.80" stroke="#d8e8f0" stroke-opacity="0.55" stroke-width="0.9"/><line x1="568" y1="347.60" x2="1080" y2="347.60" stroke="#e2e5ea" stroke-width="0.9"/><line x1="849.6" y1="347.60" x2="1062" y2="347.60" stroke="#d8e8f0" stroke-opacity="0.55" stroke-width="0.9"/><line x1="568" y1="366.40" x2="1080" y2="366.40" stroke="#e2e5ea" stroke-width="0.9"/><line x1="849.6" y1="366.40" x2="1062" y2="366.40" stroke="#d8e8f0" stroke-opacity="0.55" stroke-width="0.9"/><line x1="568" y1="385.20" x2="1080" y2="385.20" stroke="#e2e5ea" stroke-width="0.9"/><line x1="849.6" y1="385.20" x2="1062" y2="385.20" stroke="#d8e8f0" stroke-opacity="0.55" stroke-width="0.9"/><line x1="568" y1="404.00" x2="1080" y2="404.00" stroke="#e2e5ea" stroke-width="0.9"/><line x1="849.6" y1="404.00" x2="1062" y2="404.00" stroke="#d8e8f0" stroke-opacity="0.55" stroke-width="0.9"/><line x1="568" y1="422.80" x2="1080" y2="422.80" stroke="#e2e5ea" stroke-width="0.9"/><line x1="849.6" y1="422.80" x2="1062" y2="422.80" stroke="#d8e8f0" stroke-opacity="0.55" stroke-width="0.9"/><line x1="568" y1="441.60" x2="1080" y2="441.60" stroke="#e2e5ea" stroke-width="0.9"/><line x1="849.6" y1="441.60" x2="1062" y2="441.60" stroke="#d8e8f0" stroke-opacity="0.55" stroke-width="0.9"/><line x1="568" y1="460.40" x2="1080" y2="460.40" stroke="#e2e5ea" stroke-width="0.9"/><line x1="849.6" y1="460.40" x2="1062" y2="460.40" stroke="#d8e8f0" stroke-opacity="0.55" stroke-width="0.9"/><line x1="568" y1="479.20" x2="1080" y2="479.20" stroke="#e2e5ea" stroke-width="0.9"/><line x1="849.6" y1="479.20" x2="1062" y2="479.20" stroke="#d8e8f0" stroke-opacity="0.55" stroke-width="0.9"/><line x1="568" y1="498.00" x2="1080" y2="498.00" stroke="#e2e5ea" stroke-width="0.9"/><line x1="849.6" y1="498.00" x2="1062" y2="498.00" stroke="#d8e8f0" stroke-opacity="0.55" stroke-width="0.9"/><line x1="568" y1="516.80" x2="1080" y2="516.80" stroke="#e2e5ea" stroke-width="0.9"/><line x1="849.6" y1="516.80" x2="1062" y2="516.80" stroke="#d8e8f0" stroke-opacity="0.55" stroke-width="0.9"/><line x1="594.00" y1="157.6" x2="594.00" y2="516.8" stroke="#e0e3e8" stroke-width="0.9"/><line x1="645.60" y1="157.6" x2="645.60" y2="516.8" stroke="#e0e3e8" stroke-width="0.9"/><line x1="697.20" y1="157.6" x2="697.20" y2="516.8" stroke="#e0e3e8" stroke-width="0.9"/><line x1="748.80" y1="157.6" x2="748.80" y2="516.8" stroke="#e0e3e8" stroke-width="0.9"/><line x1="800.40" y1="157.6" x2="800.40" y2="516.8" stroke="#e0e3e8" stroke-width="0.9"/><line x1="852.00" y1="157.6" x2="852.00" y2="516.8" stroke="#e0e3e8" stroke-width="0.9"/><line x1="852.00" y1="159.6" x2="852.00" y2="516.8" stroke="#e8f0f8" stroke-opacity="0.6" stroke-width="0.9"/><line x1="903.60" y1="157.6" x2="903.60" y2="516.8" stroke="#e0e3e8" stroke-width="0.9"/><line x1="903.60" y1="159.6" x2="903.60" y2="516.8" stroke="#e8f0f8" stroke-opacity="0.6" stroke-width="0.9"/><line x1="955.20" y1="157.6" x2="955.20" y2="516.8" stroke="#e0e3e8" stroke-width="0.9"/><line x1="955.20" y1="159.6" x2="955.20" y2="516.8" stroke="#e8f0f8" stroke-opacity="0.6" stroke-width="0.9"/><line x1="1006.80" y1="157.6" x2="1006.80" y2="516.8" stroke="#e0e3e8" stroke-width="0.9"/><line x1="1006.80" y1="159.6" x2="1006.80" y2="516.8" stroke="#e8f0f8" stroke-opacity="0.6" stroke-width="0.9"/><line x1="1058.40" y1="157.6" x2="1058.40" y2="516.8" stroke="#e0e3e8" stroke-width="0.9"/><line x1="1058.40" y1="159.6" x2="1058.40" y2="516.8" stroke="#e8f0f8" stroke-opacity="0.6" stroke-width="0.9"/><line x1="568" y1="159.6" x2="568" y2="516.8" stroke="#e4e6ea" stroke-width="0.9"/><text transform="translate(563.00 163.39) scale(0.85 1)" font-size="8.47" fill="#333" text-anchor="end" >3063%</text><text transform="translate(563.00 182.19) scale(0.85 1)" font-size="8.47" fill="#333" text-anchor="end" >2883%</text><text transform="translate(563.00 200.99) scale(0.85 1)" font-size="8.47" fill="#333" text-anchor="end" >2714%</text><text transform="translate(563.00 219.79) scale(0.85 1)" font-size="8.47" fill="#333" text-anchor="end" >2544%</text><text transform="translate(563.00 238.59) scale(0.85 1)" font-size="8.47" fill="#333" text-anchor="end" >2374%</text><text transform="translate(563.00 257.39) scale(0.85 1)" font-size="8.47" fill="#333" text-anchor="end" >2206%</text><text transform="translate(563.00 276.19) scale(0.85 1)" font-size="8.47" fill="#333" text-anchor="end" >2036%</text><text transform="translate(563.00 294.99) scale(0.85 1)" font-size="8.47" fill="#333" text-anchor="end" >1866%</text><text transform="translate(563.00 313.79) scale(0.85 1)" font-size="8.47" fill="#333" text-anchor="end" >1696%</text><text transform="translate(563.00 332.59) scale(0.85 1)" font-size="8.47" fill="#333" text-anchor="end" >1526%</text><text transform="translate(563.00 351.39) scale(0.85 1)" font-size="8.47" fill="#333" text-anchor="end" >1357%</text><text transform="translate(563.00 370.19) scale(0.85 1)" font-size="8.47" fill="#333" text-anchor="end" >1187%</text><text transform="translate(563.00 388.99) scale(0.85 1)" font-size="8.47" fill="#333" text-anchor="end" >1018%</text><text transform="translate(563.00 407.79) scale(0.85 1)" font-size="8.47" fill="#333" text-anchor="end" >848%</text><text transform="translate(563.00 426.59) scale(0.85 1)" font-size="8.47" fill="#333" text-anchor="end" >678%</text><text transform="translate(563.00 445.39) scale(0.85 1)" font-size="8.47" fill="#333" text-anchor="end" >509%</text><text transform="translate(563.00 464.19) scale(0.85 1)" font-size="8.47" fill="#333" text-anchor="end" >339%</text><text transform="translate(563.00 482.99) scale(0.85 1)" font-size="8.47" fill="#333" text-anchor="end" >170%</text><text transform="translate(563.00 501.79) scale(0.85 1)" font-size="8.47" fill="#333" text-anchor="end" >0%</text><text transform="translate(563.00 520.59) scale(0.85 1)" font-size="8.47" fill="#333" text-anchor="end" >-170%</text><text transform="translate(594.00 156.19) scale(0.85 1)" font-size="8.47" fill="#333" text-anchor="middle" >-5.1%</text><text transform="translate(645.60 156.19) scale(0.85 1)" font-size="8.47" fill="#333" text-anchor="middle" >-4.4%</text><text transform="translate(697.20 156.19) scale(0.85 1)" font-size="8.47" fill="#333" text-anchor="middle" >-3.7%</text><text transform="translate(748.80 156.19) scale(0.85 1)" font-size="8.47" fill="#333" text-anchor="middle" >-2.9%</text><text transform="translate(800.40 156.19) scale(0.85 1)" font-size="8.47" fill="#333" text-anchor="middle" >-2.2%</text><text transform="translate(852.00 156.19) scale(0.85 1)" font-size="8.47" fill="#333" text-anchor="middle" >-1.4%</text><text transform="translate(903.60 156.19) scale(0.85 1)" font-size="8.47" fill="#333" text-anchor="middle" >-0.7%</text><text transform="translate(955.20 156.19) scale(0.85 1)" font-size="8.47" fill="#333" text-anchor="middle" >0.0%</text><text transform="translate(1006.80 156.19) scale(0.85 1)" font-size="8.47" fill="#333" text-anchor="middle" >0.7%</text><text transform="translate(1058.40 156.19) scale(0.85 1)" font-size="8.47" fill="#333" text-anchor="middle" >1.4%</text><text transform="translate(594.00 528.49) scale(0.85 1)" font-size="8.47" fill="#333" text-anchor="middle" >6500</text><text transform="translate(645.60 528.49) scale(0.85 1)" font-size="8.47" fill="#333" text-anchor="middle" >6550</text><text transform="translate(697.20 528.49) scale(0.85 1)" font-size="8.47" fill="#333" text-anchor="middle" >6600</text><text transform="translate(748.80 528.49) scale(0.85 1)" font-size="8.47" fill="#333" text-anchor="middle" >6650</text><text transform="translate(800.40 528.49) scale(0.85 1)" font-size="8.47" fill="#333" text-anchor="middle" >6700</text><text transform="translate(903.60 528.49) scale(0.85 1)" font-size="8.47" fill="#333" text-anchor="middle" >6800</text><text transform="translate(955.20 528.49) scale(0.85 1)" font-size="8.47" fill="#333" text-anchor="middle" >6850</text><text transform="translate(1006.80 528.49) scale(0.85 1)" font-size="8.47" fill="#333" text-anchor="middle" >6900</text><text transform="translate(1058.40 528.49) scale(0.85 1)" font-size="8.47" fill="#333" text-anchor="middle" >6950</text><rect x="849.3" y="148.6" width="21.2" height="7.7" fill="#fff" stroke="#555" stroke-width="0.8"/><text transform="translate(860.00 155.89) scale(0.85 1)" font-size="8.47" fill="#333" text-anchor="middle" >-1.4%</text><text transform="translate(858.4 162.3) rotate(-90) scale(0.87 1)" font-size="8.3" fill="#5a9ccc" text-anchor="end">6748.18</text><text transform="translate(910.4 162.3) rotate(-90) scale(0.87 1)" font-size="8.3" fill="#8fb4e0" text-anchor="end">6799.55</text><text transform="translate(1008.4 162.3) rotate(-90) scale(0.87 1)" font-size="8.3" fill="#8fb4e0" text-anchor="end">6902.39</text><text transform="translate(1060.4 162.3) rotate(-90) scale(0.87 1)" font-size="8.3" fill="#5a9ccc" text-anchor="end">6953.66</text><line x1="568" y1="498.2" x2="1080" y2="498.2" stroke="#707070" stroke-width="1"/><line x1="861" y1="486.4" x2="931" y2="489.4" stroke="#d8a898" stroke-width="1.4" stroke-opacity="0.85"/><line x1="861" y1="492" x2="931" y2="494.1" stroke="#d8a898" stroke-width="1.4" stroke-opacity="0.85"/><polyline points="568,484.4 820,488.8 1080,493.5" fill="none" stroke="#5ee05e" stroke-width="1"/><polyline points="568,492.9 720,489 860,489.3 1080,494.8" fill="none" stroke="#30dc30" stroke-width="1.2"/><polyline points="568,172.5 645.8,450.5 671.5,498.3 1080,498.3" fill="none" stroke="#2a38b0" stroke-width="1.6"/><polyline points="568.9,170.6 646.7,448.8 671.9,496.6 1080,496.6" fill="none" stroke="#1a8a1a" stroke-width="1.0"/><circle cx="859.7" cy="489.3" r="2.8" fill="#4cc8d0" stroke="#224" stroke-width="0.7"/><rect x="571.4" y="163.5" width="111.4" height="84.8" rx="3" fill="#e9edf3" fill-opacity="0.82" stroke="#8e9ab0" stroke-width="0.9"/><rect x="576.2" y="168.20" width="2.8" height="9.2" fill="#b8ecb0"/><text transform="translate(579.6 176.21) scale(0.85 1)" font-size="8.8"><tspan fill="#555"></tspan><tspan fill="#555">1,067.93 Realized PnL</tspan></text><rect x="576.2" y="177.60" width="2.8" height="9.2" fill="#40c040"/><text transform="translate(579.6 185.61) scale(0.85 1)" font-size="8.8"><tspan fill="#555">-1 </tspan><tspan fill="#f06060">02dic. 6350 Put &#916;</tspan></text><text transform="translate(677.80 185.62) scale(0.85 1)" font-size="8.82" fill="#f06060" text-anchor="end" >-9.80</text><rect x="576.2" y="187.00" width="2.8" height="9.2" fill="#40c040"/><text transform="translate(579.6 195.01) scale(0.85 1)" font-size="8.8"><tspan fill="#555">+1 </tspan><tspan fill="#6070f0">02dic. 6325 Put &#916;</tspan></text><text transform="translate(677.80 195.02) scale(0.85 1)" font-size="8.82" fill="#6070f0" text-anchor="end" >-8.96</text><rect x="576.2" y="196.40" width="2.8" height="9.2" fill="#6080e0"/><text transform="translate(579.6 204.41) scale(0.85 1)" font-size="8.8"><tspan fill="#555">+1 </tspan><tspan fill="#6070f0">02dic. 6375 Put &#916;</tspan></text><text transform="translate(677.80 204.42) scale(0.85 1)" font-size="8.82" fill="#6070f0" text-anchor="end" >-10.77</text><rect x="576.2" y="205.80" width="2.8" height="9.2" fill="#90a8e8"/><text transform="translate(579.6 213.81) scale(0.85 1)" font-size="8.8"><tspan fill="#555">+1 </tspan><tspan fill="#6070f0">02dic. 6575 Put &#916;</tspan></text><text transform="translate(677.80 213.82) scale(0.85 1)" font-size="8.82" fill="#6070f0" text-anchor="end" >-23.51</text><rect x="576.2" y="215.20" width="2.8" height="9.2" fill="#90a8e8"/><text transform="translate(579.6 223.21) scale(0.85 1)" font-size="8.8"><tspan fill="#555">-4 </tspan><tspan fill="#f06060">02dic. 6475 Put &#916;</tspan></text><text transform="translate(677.80 223.22) scale(0.85 1)" font-size="8.82" fill="#f06060" text-anchor="end" >-15.81</text><rect x="576.2" y="224.60" width="2.8" height="9.2" fill="#90a8e8"/><text transform="translate(579.6 232.61) scale(0.85 1)" font-size="8.8"><tspan fill="#555">+1 </tspan><tspan fill="#6070f0">02dic. 6550 Put &#916;</tspan></text><text transform="translate(677.80 232.62) scale(0.85 1)" font-size="8.82" fill="#6070f0" text-anchor="end" >-21.30</text><rect x="576.2" y="234.00" width="2.8" height="9.2" fill="#90a8e8"/><text transform="translate(579.6 242.01) scale(0.85 1)" font-size="8.8"><tspan fill="#555">+1 </tspan><tspan fill="#6070f0">02dic. 6350 Put &#916;</tspan></text><text transform="translate(677.80 242.02) scale(0.85 1)" font-size="8.82" fill="#6070f0" text-anchor="end" >-9.80</text><rect x="534.2" y="484.2" width="30.8" height="9.5" fill="#0a8a0a"/><text transform="translate(563.50 492.29) scale(0.85 1)" font-size="8.47" fill="#fff" text-anchor="end" >79%</text><rect x="570.9" y="484.8" width="63.5" height="29.1" rx="3" fill="#e6eaf0" fill-opacity="0.9" stroke="#8e9ab0" stroke-width="0.9"/><text transform="translate(575.50 497.92) scale(0.85 1)" font-size="8.82" fill="#6e8e6e" text-anchor="start" >02/12/2025 (0)</text><text transform="translate(575.50 507.22) scale(0.85 1)" font-size="8.82" fill="#88e088" text-anchor="start" >13/11/2025 (19)</text><rect x="533.5" y="531.5" width="570" height="124.2" rx="3.5" fill="#e9eef6" stroke="#8e9aab" stroke-width="0.9"/><text transform="translate(551.00 553.83) scale(0.85 1)" font-size="8.59" fill="#5a5a5a" text-anchor="middle" >PnL</text><text transform="translate(551.00 582.13) scale(0.85 1)" font-size="8.59" fill="#5a5a5a" text-anchor="middle" >Delta</text><text transform="translate(551.00 604.13) scale(0.85 1)" font-size="8.59" fill="#5a5a5a" text-anchor="middle" >Gamma</text><text transform="translate(551.00 625.33) scale(0.85 1)" font-size="8.59" fill="#5a5a5a" text-anchor="middle" >Theta</text><text transform="translate(551.00 647.33) scale(0.85 1)" font-size="8.59" fill="#5a5a5a" text-anchor="middle" >Vega</text><rect x="568.70" y="545.13" width="51.6" height="4.77" fill="#5a74ec" stroke="#5a5a5a" stroke-width="0.8"/><rect x="568.70" y="571.22" width="51.6" height="7.08" fill="#5a74ec" stroke="#5a5a5a" stroke-width="0.8"/><rect x="568.70" y="600.60" width="51.6" height="6.21" fill="#f07878" stroke="#5a5a5a" stroke-width="0.8"/><rect x="568.70" y="615.00" width="51.6" height="6.70" fill="#5a74ec" stroke="#5a5a5a" stroke-width="0.8"/><rect x="568.70" y="643.90" width="51.6" height="6.70" fill="#f07878" stroke="#5a5a5a" stroke-width="0.8"/><text transform="translate(594.00 557.83) scale(0.85 1)" font-size="8.59" fill="#6878f0" text-anchor="middle" >373</text><text transform="translate(594.00 564.53) scale(0.85 1)" font-size="8.59" fill="#6878f0" text-anchor="middle" >63%</text><text transform="translate(594.00 586.53) scale(0.85 1)" font-size="8.59" fill="#6878f0" text-anchor="middle" >3.42</text><text transform="translate(594.00 600.53) scale(0.85 1)" font-size="8.59" fill="#f06868" text-anchor="middle" >-0.03</text><text transform="translate(594.00 629.93) scale(0.85 1)" font-size="8.59" fill="#6878f0" text-anchor="middle" >56.06</text><text transform="translate(594.00 643.93) scale(0.85 1)" font-size="8.59" fill="#f06868" text-anchor="middle" >-140.53</text><rect x="620.30" y="543.47" width="51.6" height="6.43" fill="#5a74ec" stroke="#5a5a5a" stroke-width="0.8"/><rect x="620.30" y="574.51" width="51.6" height="3.79" fill="#5a74ec" stroke="#5a5a5a" stroke-width="0.8"/><rect x="620.30" y="600.60" width="51.6" height="6.21" fill="#f07878" stroke="#5a5a5a" stroke-width="0.8"/><rect x="620.30" y="615.11" width="51.6" height="6.59" fill="#5a74ec" stroke="#5a5a5a" stroke-width="0.8"/><rect x="620.30" y="643.90" width="51.6" height="6.01" fill="#f07878" stroke="#5a5a5a" stroke-width="0.8"/><text transform="translate(645.60 557.83) scale(0.85 1)" font-size="8.59" fill="#6878f0" text-anchor="middle" >502</text><text transform="translate(645.60 564.53) scale(0.85 1)" font-size="8.59" fill="#6878f0" text-anchor="middle" >85%</text><text transform="translate(645.60 586.53) scale(0.85 1)" font-size="8.59" fill="#6878f0" text-anchor="middle" >1.83</text><text transform="translate(645.60 600.53) scale(0.85 1)" font-size="8.59" fill="#f06868" text-anchor="middle" >-0.03</text><text transform="translate(645.60 629.93) scale(0.85 1)" font-size="8.59" fill="#6878f0" text-anchor="middle" >55.13</text><text transform="translate(645.60 643.93) scale(0.85 1)" font-size="8.59" fill="#f06868" text-anchor="middle" >-125.97</text><rect x="671.90" y="542.73" width="51.6" height="7.17" fill="#5a74ec" stroke="#5a5a5a" stroke-width="0.8"/><rect x="671.90" y="577.14" width="51.6" height="1.16" fill="#5a74ec" stroke="#5a5a5a" stroke-width="0.8"/><rect x="671.90" y="600.60" width="51.6" height="4.14" fill="#f07878" stroke="#5a5a5a" stroke-width="0.8"/><rect x="671.90" y="615.76" width="51.6" height="5.94" fill="#5a74ec" stroke="#5a5a5a" stroke-width="0.8"/><rect x="671.90" y="643.90" width="51.6" height="5.00" fill="#f07878" stroke="#5a5a5a" stroke-width="0.8"/><text transform="translate(697.20 557.83) scale(0.85 1)" font-size="8.59" fill="#6878f0" text-anchor="middle" >560</text><text transform="translate(697.20 564.53) scale(0.85 1)" font-size="8.59" fill="#6878f0" text-anchor="middle" >95%</text><text transform="translate(697.20 586.53) scale(0.85 1)" font-size="8.59" fill="#6878f0" text-anchor="middle" >0.56</text><text transform="translate(697.20 600.53) scale(0.85 1)" font-size="8.59" fill="#f06868" text-anchor="middle" >-0.02</text><text transform="translate(697.20 629.93) scale(0.85 1)" font-size="8.59" fill="#6878f0" text-anchor="middle" >49.72</text><text transform="translate(697.20 643.93) scale(0.85 1)" font-size="8.59" fill="#f06868" text-anchor="middle" >-104.75</text><rect x="723.50" y="542.68" width="51.6" height="7.22" fill="#5a74ec" stroke="#5a5a5a" stroke-width="0.8"/><rect x="723.50" y="578.30" width="51.6" height="0.75" fill="#f07878" stroke="#5a5a5a" stroke-width="0.8"/><rect x="723.50" y="600.60" width="51.6" height="4.14" fill="#f07878" stroke="#5a5a5a" stroke-width="0.8"/><rect x="723.50" y="616.74" width="51.6" height="4.96" fill="#5a74ec" stroke="#5a5a5a" stroke-width="0.8"/><rect x="723.50" y="643.90" width="51.6" height="3.84" fill="#f07878" stroke="#5a5a5a" stroke-width="0.8"/><text transform="translate(748.80 557.83) scale(0.85 1)" font-size="8.59" fill="#6878f0" text-anchor="middle" >564</text><text transform="translate(748.80 564.53) scale(0.85 1)" font-size="8.59" fill="#6878f0" text-anchor="middle" >96%</text><text transform="translate(748.80 577.53) scale(0.85 1)" font-size="8.59" fill="#f06868" text-anchor="middle" >-0.36</text><text transform="translate(748.80 600.53) scale(0.85 1)" font-size="8.59" fill="#f06868" text-anchor="middle" >-0.02</text><text transform="translate(748.80 629.93) scale(0.85 1)" font-size="8.59" fill="#6878f0" text-anchor="middle" >41.50</text><text transform="translate(748.80 643.93) scale(0.85 1)" font-size="8.59" fill="#f06868" text-anchor="middle" >-80.48</text><rect x="775.10" y="543.12" width="51.6" height="6.78" fill="#5a74ec" stroke="#5a5a5a" stroke-width="0.8"/><rect x="775.10" y="578.30" width="51.6" height="1.99" fill="#f07878" stroke="#5a5a5a" stroke-width="0.8"/><rect x="775.10" y="600.60" width="51.6" height="2.07" fill="#f07878" stroke="#5a5a5a" stroke-width="0.8"/><rect x="775.10" y="617.87" width="51.6" height="3.83" fill="#5a74ec" stroke="#5a5a5a" stroke-width="0.8"/><rect x="775.10" y="643.90" width="51.6" height="2.69" fill="#f07878" stroke="#5a5a5a" stroke-width="0.8"/><text transform="translate(800.40 557.83) scale(0.85 1)" font-size="8.59" fill="#6878f0" text-anchor="middle" >530</text><text transform="translate(800.40 564.53) scale(0.85 1)" font-size="8.59" fill="#6878f0" text-anchor="middle" >90%</text><text transform="translate(800.40 577.53) scale(0.85 1)" font-size="8.59" fill="#f06868" text-anchor="middle" >-0.96</text><text transform="translate(800.40 600.53) scale(0.85 1)" font-size="8.59" fill="#f06868" text-anchor="middle" >-0.01</text><text transform="translate(800.40 629.93) scale(0.85 1)" font-size="8.59" fill="#6878f0" text-anchor="middle" >32.08</text><text transform="translate(800.40 643.93) scale(0.85 1)" font-size="8.59" fill="#f06868" text-anchor="middle" >-56.37</text><rect x="826.70" y="543.97" width="51.6" height="5.93" fill="#5a74ec" stroke="#5a5a5a" stroke-width="0.8"/><rect x="826.70" y="578.30" width="51.6" height="2.67" fill="#f07878" stroke="#5a5a5a" stroke-width="0.8"/><line x1="826.70" y1="600.6" x2="878.30" y2="600.6" stroke="#666" stroke-width="0.9"/><rect x="826.70" y="619.13" width="51.6" height="2.57" fill="#5a74ec" stroke="#5a5a5a" stroke-width="0.8"/><rect x="826.70" y="643.90" width="51.6" height="1.52" fill="#f07878" stroke="#5a5a5a" stroke-width="0.8"/><rect x="878.30" y="544.69" width="51.6" height="5.21" fill="#5a74ec" stroke="#5a5a5a" stroke-width="0.8"/><rect x="878.30" y="578.30" width="51.6" height="2.82" fill="#f07878" stroke="#5a5a5a" stroke-width="0.8"/><line x1="878.30" y1="600.6" x2="929.90" y2="600.6" stroke="#666" stroke-width="0.9"/><rect x="878.30" y="619.95" width="51.6" height="1.75" fill="#5a74ec" stroke="#5a5a5a" stroke-width="0.8"/><rect x="878.30" y="643.90" width="51.6" height="0.83" fill="#f07878" stroke="#5a5a5a" stroke-width="0.8"/><text transform="translate(903.60 557.83) scale(0.85 1)" font-size="8.59" fill="#6878f0" text-anchor="middle" >407</text><text transform="translate(903.60 564.53) scale(0.85 1)" font-size="8.59" fill="#6878f0" text-anchor="middle" >69%</text><text transform="translate(903.60 577.53) scale(0.85 1)" font-size="8.59" fill="#f06868" text-anchor="middle" >-1.36</text><text transform="translate(903.60 608.53) scale(0.85 1)" font-size="8.59" fill="#6878f0" text-anchor="middle" >0.00</text><text transform="translate(903.60 629.93) scale(0.85 1)" font-size="8.59" fill="#6878f0" text-anchor="middle" >14.68</text><text transform="translate(903.60 643.93) scale(0.85 1)" font-size="8.59" fill="#f06868" text-anchor="middle" >-17.42</text><rect x="929.90" y="545.55" width="51.6" height="4.35" fill="#5a74ec" stroke="#5a5a5a" stroke-width="0.8"/><rect x="929.90" y="578.30" width="51.6" height="2.69" fill="#f07878" stroke="#5a5a5a" stroke-width="0.8"/><line x1="929.90" y1="600.6" x2="981.50" y2="600.6" stroke="#666" stroke-width="0.9"/><rect x="929.90" y="620.72" width="51.6" height="0.98" fill="#5a74ec" stroke="#5a5a5a" stroke-width="0.8"/><line x1="929.90" y1="643.9" x2="981.50" y2="643.9" stroke="#666" stroke-width="0.9"/><text transform="translate(955.20 557.83) scale(0.85 1)" font-size="8.59" fill="#6878f0" text-anchor="middle" >340</text><text transform="translate(955.20 564.53) scale(0.85 1)" font-size="8.59" fill="#6878f0" text-anchor="middle" >58%</text><text transform="translate(955.20 577.53) scale(0.85 1)" font-size="8.59" fill="#f06868" text-anchor="middle" >-1.30</text><text transform="translate(955.20 608.53) scale(0.85 1)" font-size="8.59" fill="#6878f0" text-anchor="middle" >0.00</text><text transform="translate(955.20 629.93) scale(0.85 1)" font-size="8.59" fill="#6878f0" text-anchor="middle" >8.16</text><text transform="translate(955.20 643.93) scale(0.85 1)" font-size="8.59" fill="#f06868" text-anchor="middle" >-4.61</text><rect x="981.50" y="546.34" width="51.6" height="3.56" fill="#5a74ec" stroke="#5a5a5a" stroke-width="0.8"/><rect x="981.50" y="578.30" width="51.6" height="2.36" fill="#f07878" stroke="#5a5a5a" stroke-width="0.8"/><line x1="981.50" y1="600.6" x2="1033.10" y2="600.6" stroke="#666" stroke-width="0.9"/><line x1="981.50" y1="621.7" x2="1033.10" y2="621.7" stroke="#666" stroke-width="0.9"/><line x1="981.50" y1="643.9" x2="1033.10" y2="643.9" stroke="#666" stroke-width="0.9"/><text transform="translate(1006.80 557.83) scale(0.85 1)" font-size="8.59" fill="#6878f0" text-anchor="middle" >278</text><text transform="translate(1006.80 564.53) scale(0.85 1)" font-size="8.59" fill="#6878f0" text-anchor="middle" >47%</text><text transform="translate(1006.80 577.53) scale(0.85 1)" font-size="8.59" fill="#f06868" text-anchor="middle" >-1.14</text><text transform="translate(1006.80 608.53) scale(0.85 1)" font-size="8.59" fill="#6878f0" text-anchor="middle" >0.00</text><text transform="translate(1006.80 629.93) scale(0.85 1)" font-size="8.59" fill="#6878f0" text-anchor="middle" >3.41</text><text transform="translate(1006.80 651.53) scale(0.85 1)" font-size="8.59" fill="#6878f0" text-anchor="middle" >3.78</text><rect x="1033.10" y="547.01" width="51.6" height="2.89" fill="#5a74ec" stroke="#5a5a5a" stroke-width="0.8"/><rect x="1033.10" y="578.30" width="51.6" height="1.97" fill="#f07878" stroke="#5a5a5a" stroke-width="0.8"/><line x1="1033.10" y1="600.6" x2="1084.70" y2="600.6" stroke="#666" stroke-width="0.9"/><line x1="1033.10" y1="621.7" x2="1084.70" y2="621.7" stroke="#666" stroke-width="0.9"/><line x1="1033.10" y1="643.9" x2="1084.70" y2="643.9" stroke="#666" stroke-width="0.9"/><text transform="translate(1058.40 557.83) scale(0.85 1)" font-size="8.59" fill="#6878f0" text-anchor="middle" >226</text><text transform="translate(1058.40 564.53) scale(0.85 1)" font-size="8.59" fill="#6878f0" text-anchor="middle" >38%</text><text transform="translate(1058.40 577.53) scale(0.85 1)" font-size="8.59" fill="#f06868" text-anchor="middle" >-0.95</text><text transform="translate(1058.40 608.53) scale(0.85 1)" font-size="8.59" fill="#6878f0" text-anchor="middle" >0.00</text><text transform="translate(1058.40 629.93) scale(0.85 1)" font-size="8.59" fill="#6878f0" text-anchor="middle" >0.28</text><text transform="translate(1058.40 651.53) scale(0.85 1)" font-size="8.59" fill="#6878f0" text-anchor="middle" >8.42</text><rect x="842.7" y="520" width="34" height="135.6" rx="3.5" fill="#e4eaf4" stroke="#8a97a8" stroke-width="0.9"/><rect x="843.5" y="544" width="32.5" height="7" fill="#d4e0ee"/><text transform="translate(859.70 528.49) scale(0.85 1)" font-size="8.47" fill="#333" text-anchor="middle" >6757.69</text><line x1="843.5" y1="578.6" x2="876" y2="578.6" stroke="#d2d6de" stroke-width="1.6"/><line x1="843.5" y1="600.8" x2="876" y2="600.8" stroke="#d2d6de" stroke-width="1.6"/><line x1="843.5" y1="621.8" x2="876" y2="621.8" stroke="#d2d6de" stroke-width="1.6"/><line x1="843.5" y1="643.8" x2="876" y2="643.8" stroke="#d2d6de" stroke-width="1.6"/><text transform="translate(856.50 557.93) scale(0.85 1)" font-size="8.59" fill="#6878f0" text-anchor="middle" opacity="0.22">463</text><text transform="translate(856.50 564.63) scale(0.85 1)" font-size="8.59" fill="#6878f0" text-anchor="middle" opacity="0.22">78%</text><text transform="translate(856.50 577.53) scale(0.85 1)" font-size="8.59" fill="#f06868" text-anchor="middle" opacity="0.22">-1.32</text><text transform="translate(856.50 608.53) scale(0.85 1)" font-size="8.59" fill="#6878f0" text-anchor="middle" opacity="0.22">0.00</text><text transform="translate(856.50 629.93) scale(0.85 1)" font-size="8.59" fill="#6878f0" text-anchor="middle" opacity="0.22">22.05</text><text transform="translate(856.50 643.93) scale(0.85 1)" font-size="8.59" fill="#f06868" text-anchor="middle" opacity="0.22">-34.52</text><text transform="translate(859.70 550.93) scale(0.85 1)" font-size="9.41" fill="#3040f0" text-anchor="middle" font-weight="normal" stroke="#3040f0" stroke-width="0.15">463</text><text transform="translate(859.70 560.83) scale(0.85 1)" font-size="9.41" fill="#3040f0" text-anchor="middle" font-weight="normal" stroke="#3040f0" stroke-width="0.15">78.6%</text><text transform="translate(859.70 583.13) scale(0.85 1)" font-size="9.41" fill="#f03030" text-anchor="middle" font-weight="normal" stroke="#f03030" stroke-width="0.15">-1.29</text><text transform="translate(859.70 604.13) scale(0.85 1)" font-size="9.41" fill="#3040f0" text-anchor="middle" font-weight="normal" stroke="#3040f0" stroke-width="0.15">0.00</text><text transform="translate(859.70 626.23) scale(0.85 1)" font-size="9.41" fill="#3040f0" text-anchor="middle" font-weight="normal" stroke="#3040f0" stroke-width="0.15">21.49</text><text transform="translate(859.70 648.13) scale(0.85 1)" font-size="9.41" fill="#f03030" text-anchor="middle" font-weight="normal" stroke="#f03030" stroke-width="0.15">-31.88</text></svg></body></html>
